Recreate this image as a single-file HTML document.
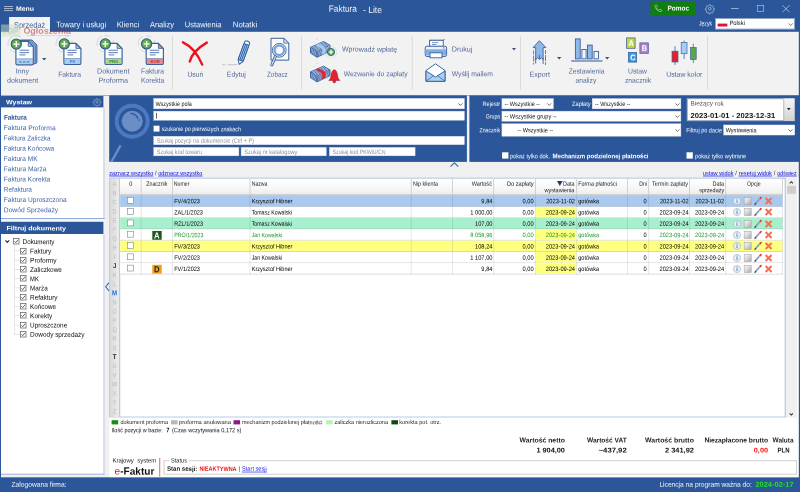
<!DOCTYPE html>
<html lang="pl"><head><meta charset="utf-8"><title>Faktura - Lite</title>
<style>
html,body{margin:0;padding:0;}
body{width:800px;height:492px;overflow:hidden;background:#2b579a;position:relative;font-family:"Liberation Sans",sans-serif;font-size:7px;color:#000;}
div{position:absolute;box-sizing:border-box;}
svg{position:absolute;overflow:visible;}
.t{white-space:nowrap;transform-origin:0 0;}
#app{left:0;top:0;width:800px;height:492px;will-change:transform;}
.inp{background:#fff;border:0.5px solid #c4cede;}
.lnk{color:#1c1ce0;text-decoration:underline;text-decoration-thickness:0.6px;text-underline-offset:0.6px;}
</style></head>
<body>
<div id="app">
<svg style="left:0px;top:0px" width="800" height="492"><rect x="0" y="0" width="800" height="492" fill="#2b579a"/></svg>
<svg style="left:4px;top:6px" width="9" height="1"><rect x="0" y="0.25" width="9" height="0.7" fill="#d3dcee"/></svg>
<svg style="left:4px;top:8px" width="9" height="1"><rect x="0" y="0.25" width="9" height="0.7" fill="#d3dcee"/></svg>
<svg style="left:4px;top:10px" width="9" height="2"><rect x="0" y="0.35" width="9" height="0.7" fill="#d3dcee"/></svg>
<div class="t" style="left:16px;top:4px;transform:translate(0px,0.7px) rotate(0.1deg) scaleX(1.094);font-size:6.3px;line-height:7px;color:#fff;font-weight:bold;">Menu</div>
<div class="t" style="left:328px;top:3px;transform:translate(0.8px,0.8px) rotate(0.1deg) scaleX(0.904);font-size:9.2px;line-height:10px;color:#f4f6fb;">Faktura</div>
<div class="t" style="left:363px;top:5px;transform:translate(0px,0px) rotate(0.1deg) scaleX(0.929);font-size:9.2px;line-height:10px;color:#f4f6fb;">- Lite</div>
<svg style="left:650px;top:1px" width="46" height="15"><rect x="0.4" y="0" width="45.2" height="14.6" fill="#117d13"/></svg>
<svg style="left:654px;top:4.3px" width="8.6" height="8.6" viewBox="0 0 24 24"><path d="M6.6 10.8c1.4 2.8 3.8 5.1 6.6 6.6l2.200-2.200c.3-.3.700-.4 1-.2 1.100.4 2.300.6 3.600.6.600 0 1 .4 1 1V20c0 .6-.4 1-1 1C10.600 21 3 13.400 3 4c0-.6.400-1 1-1h3.500c.6 0 1 .4 1 1 0 1.300.2 2.500.6 3.600.1.300 0 .7-.2 1z" fill="none" stroke="#bfe3c0" stroke-width="1.700"/></svg>
<div class="t" style="left:667px;top:4px;transform:translate(0.6px,0.52px) rotate(0.1deg) scaleX(0.917);font-size:7px;line-height:7px;color:#fff;font-weight:bold;">Pomoc</div>
<svg style="left:705.200px;top:3.900px" width="9.600" height="9.600" viewBox="0 0 20 20"><circle cx="10" cy="10" r="2.900" fill="none" stroke="#c6d3ea" stroke-width="1.300"/><path d="M10 1.600l1.500 0.200 0.600 2 1.700 0.700 1.900-1 2 2-1 1.900 0.700 1.700 2 0.600v2.600l-2 0.600-0.700 1.700 1 1.900-2 2-1.900-1-1.700 0.700-0.600 2h-2.800l-0.600-2-1.700-0.700-1.900 1-2-2 1-1.900-0.700-1.700-2-0.600v-2.600l2-0.600 0.700-1.700-1-1.900 2-2 1.900 1 1.700-0.700 0.600-2z" fill="none" stroke="#c6d3ea" stroke-width="1.300" stroke-linejoin="round"/></svg>
<svg style="left:731px;top:8px" width="8" height="1"><rect x="0" y="0.3" width="7.6" height="0.7" fill="#c3cfe6"/></svg>
<svg style="left:757px;top:5px" width="7" height="7"><rect x="0.3" y="0.6" width="6.4" height="5.8" fill="none" stroke="#bccae4" stroke-width="0.6"/></svg>
<svg style="left:782.400px;top:4.900px" width="8" height="7.600" viewBox="0 0 8 8"><path d="M0.300 0.300L7.700 7.700M7.700 0.300L0.300 7.700" stroke="#cdd8ec" stroke-width="0.700" fill="none"/></svg>
<div class="t" style="left:699px;top:19px;transform:translate(0px,0.44px) rotate(0.1deg) scaleX(0.807);font-size:6.3px;line-height:7px;color:#f4f6fb;">Język</div>
<svg style="left:715px;top:18px" width="80" height="12"><rect x="0.5" y="0.5" width="79" height="10.6" fill="#fff" stroke="#8fa3c8" stroke-width="1"/></svg>
<svg style="left:717px;top:23px" width="11" height="4"><rect x="0.6" y="0.6" width="9.8" height="2.9" fill="#dc143c"/></svg>
<div class="t" style="left:729px;top:19px;transform:translate(0.4px,0.04px) rotate(0.1deg) scaleX(0.928);font-size:6.3px;line-height:7px;color:#111;">Polski</div>
<svg style="left:787.8px;top:23.2px" width="5.4" height="3.2" viewBox="0 0 50 32"><path d="M4 4L25 26L46 4" stroke="#444" stroke-width="7" fill="none"/></svg>
<svg style="left:9px;top:17px" width="41" height="16"><rect x="0.1" y="0" width="40.9" height="15.5" fill="#f3f3f3"/></svg>
<div class="t" style="left:14px;top:20px;transform:translate(0px,0.8px) rotate(0.1deg) scaleX(0.912);font-size:8.1px;line-height:9px;color:#3a5a98;">Sprzedaż</div>
<div class="t" style="left:56px;top:20px;transform:translate(0.2px,0.3px) rotate(0.1deg) scaleX(0.941);font-size:8.1px;line-height:9px;color:#f2f5fa;">Towary i usługi</div>
<div class="t" style="left:116px;top:20px;transform:translate(0.8px,0.3px) rotate(0.1deg) scaleX(0.939);font-size:8.1px;line-height:9px;color:#f2f5fa;">Klienci</div>
<div class="t" style="left:150px;top:20px;transform:translate(0px,0.3px) rotate(0.1deg) scaleX(0.919);font-size:8.1px;line-height:9px;color:#f2f5fa;">Analizy</div>
<div class="t" style="left:184px;top:20px;transform:translate(0.8px,0.3px) rotate(0.1deg) scaleX(0.926);font-size:8.1px;line-height:9px;color:#f2f5fa;">Ustawienia</div>
<div class="t" style="left:232px;top:20px;transform:translate(0.8px,0.3px) rotate(0.1deg) scaleX(0.968);font-size:8.1px;line-height:9px;color:#f2f5fa;">Notatki</div>
<svg style="left:1px;top:31px" width="798" height="65"><rect x="0" y="0.8" width="798" height="63.5" fill="#f2f2f2"/></svg>
<div class="t" style="left:15px;top:66px;transform:translate(0.8px,0.4px) rotate(0.1deg) scaleX(0.97);font-size:7.2px;line-height:9px;color:#53699a;">Inny</div>
<div class="t" style="left:7px;top:75px;transform:translate(0px,0.8px) rotate(0.1deg) scaleX(0.987);font-size:7.2px;line-height:9px;color:#53699a;">dokument</div>
<div class="t" style="left:58px;top:69px;transform:translate(0.25px,0.7px) rotate(0.1deg) scaleX(0.938);font-size:7.2px;line-height:9px;color:#53699a;">Faktura</div>
<div class="t" style="left:97px;top:66px;transform:translate(0.05px,0.4px) rotate(0.1deg) scaleX(0.99);font-size:7.2px;line-height:9px;color:#53699a;">Dokument</div>
<div class="t" style="left:98px;top:75px;transform:translate(0.55px,0.8px) rotate(0.1deg);font-size:7.2px;line-height:9px;color:#53699a;">Proforma</div>
<div class="t" style="left:141px;top:66px;transform:translate(0.05px,0.4px) rotate(0.1deg) scaleX(0.938);font-size:7.2px;line-height:9px;color:#53699a;">Faktura</div>
<div class="t" style="left:140px;top:75px;transform:translate(0.95px,0.8px) rotate(0.1deg) scaleX(0.939);font-size:7.2px;line-height:9px;color:#53699a;">Korekta</div>
<div class="t" style="left:187px;top:69px;transform:translate(0.5px,0.7px) rotate(0.1deg) scaleX(0.94);font-size:7.2px;line-height:9px;color:#53699a;">Usuń</div>
<div class="t" style="left:226px;top:69px;transform:translate(0.85px,0.7px) rotate(0.1deg) scaleX(0.954);font-size:7.2px;line-height:9px;color:#53699a;">Edytuj</div>
<div class="t" style="left:267px;top:69px;transform:translate(0px,0.7px) rotate(0.1deg) scaleX(0.881);font-size:7.2px;line-height:9px;color:#53699a;">Zobacz</div>
<div class="t" style="left:342px;top:44px;transform:translate(0px,0.6px) rotate(0.1deg) scaleX(0.971);font-size:7.2px;line-height:9px;color:#53699a;">Wprowadź wpłatę</div>
<div class="t" style="left:343px;top:69px;transform:translate(0.8px,0.2px) rotate(0.1deg) scaleX(0.941);font-size:7.2px;line-height:9px;color:#53699a;">Wezwanie do zapłaty</div>
<div class="t" style="left:451px;top:44px;transform:translate(0.7px,0.6px) rotate(0.1deg);font-size:7.2px;line-height:9px;color:#53699a;">Drukuj</div>
<div class="t" style="left:451px;top:69px;transform:translate(0.7px,0.2px) rotate(0.1deg) scaleX(0.94);font-size:7.2px;line-height:9px;color:#53699a;">Wyślij mailem</div>
<div class="t" style="left:529px;top:69px;transform:translate(0.45px,0.7px) rotate(0.1deg) scaleX(0.985);font-size:7.2px;line-height:9px;color:#53699a;">Export</div>
<div class="t" style="left:568px;top:66px;transform:translate(0.7px,0.4px) rotate(0.1deg) scaleX(0.932);font-size:7.2px;line-height:9px;color:#53699a;">Zestawienia</div>
<div class="t" style="left:575px;top:75px;transform:translate(0.55px,0.8px) rotate(0.1deg) scaleX(0.924);font-size:7.2px;line-height:9px;color:#53699a;">analizy</div>
<div class="t" style="left:628px;top:66px;transform:translate(0px,0.4px) rotate(0.1deg) scaleX(0.95);font-size:7.2px;line-height:9px;color:#53699a;">Ustaw</div>
<div class="t" style="left:625px;top:75px;transform:translate(0px,0.8px) rotate(0.1deg) scaleX(0.935);font-size:7.2px;line-height:9px;color:#53699a;">znacznik</div>
<div class="t" style="left:666px;top:69px;transform:translate(0.15px,0.7px) rotate(0.1deg) scaleX(0.965);font-size:7.2px;line-height:9px;color:#53699a;">Ustaw kolor</div>
<svg style="left:172px;top:36px" width="1" height="54"><rect x="0" y="0" width="0.8" height="53.4" fill="#d4d4d4"/></svg>
<svg style="left:301px;top:36px" width="1" height="54"><rect x="0.1" y="0" width="0.8" height="53.4" fill="#d4d4d4"/></svg>
<svg style="left:411px;top:36px" width="2" height="54"><rect x="0.8" y="0" width="0.8" height="53.4" fill="#d4d4d4"/></svg>
<svg style="left:520px;top:36px" width="1" height="54"><rect x="0.1" y="0" width="0.8" height="53.4" fill="#d4d4d4"/></svg>
<svg style="left:707px;top:36px" width="1" height="54"><rect x="0.1" y="0" width="0.8" height="53.4" fill="#d4d4d4"/></svg>
<svg style="left:42.3px;top:57.6px" width="4.4" height="2.6" viewBox="0 0 44 26"><path d="M0 0H44L22 26Z" fill="#3a4f78"/></svg>
<svg style="left:512.3px;top:47.7px" width="4" height="2.4" viewBox="0 0 44 26"><path d="M0 0H44L22 26Z" fill="#3a4f78"/></svg>
<svg style="left:557.3px;top:56.9px" width="4.4" height="2.6" viewBox="0 0 44 26"><path d="M0 0H44L22 26Z" fill="#3a4f78"/></svg>
<svg style="left:604.8px;top:56.9px" width="4.4" height="2.6" viewBox="0 0 44 26"><path d="M0 0H44L22 26Z" fill="#3a4f78"/></svg>
<svg style="left:1px;top:24px" width="20" height="13"><rect x="0" y="0.5" width="19.3" height="12" fill="rgba(206,226,190,0.5)"/></svg>
<div class="t" style="left:2px;top:25px;transform:translate(0px,0.7px) rotate(0.1deg) scaleX(0.964);font-size:8.4px;line-height:10px;color:rgba(130,150,160,0.3);font-weight:bold;">TOP</div>
<div class="t" style="left:23px;top:25px;transform:translate(0.4px,0.7px) rotate(0.1deg) scaleX(1.014);font-size:8.8px;line-height:10px;color:rgba(175,30,40,0.5);font-weight:bold;">Ogłoszenia</div>
<svg style="left:26px;top:35px" width="45" height="1"><rect x="0" y="0" width="45" height="0.9" fill="rgba(110,110,110,0.2)"/></svg>
<svg style="left:0;top:0" width="200" height="100" viewBox="0 0 200 100"><circle cx="16.3" cy="44.1" r="8.300" fill="none" stroke="#c9cdd5" stroke-width="0.800" stroke-dasharray="11 3 6 4"/><path d="M19.5 41.6q0 -1.6 1.6 -1.6h10.8l5 5v16.9q0 1.6 -1.6 1.6h-14.2q-1.6 0 -1.6 -1.6z" fill="#8fb2e2" stroke="#3a5f9c" stroke-width="1"/><path d="M17.7 42.25q0 -1.6 1.6 -1.6h10.8l5 5v16.9q0 1.6 -1.6 1.6h-14.2q-1.6 0 -1.6 -1.6z" fill="#b9d1f0" stroke="#3a5f9c" stroke-width="1"/><path d="M15.9 42.9q0 -1.6 1.6 -1.6h10.8l5 5v16.9q0 1.6 -1.6 1.6h-14.2q-1.6 0 -1.6 -1.6z" fill="#fdfeff"/><path d="M16.4 59.1h16.4v4.1q0 1.100 -1.100 1.100h-14.2q-1.100 0 -1.100 -1.100z" fill="#a9d0f7"/><path d="M16.4 58.8h16.4" stroke="#3a5f9c" stroke-width="0.700" opacity="0.750"/><path d="M28.3 41.6v4.7h4.7z" fill="#a9c6ea" stroke="#3a5f9c" stroke-width="0.800"/><rect x="19.5" y="49.7" width="9.6" height="1.150" fill="#6f8cbf"/><rect x="19.5" y="52" width="9.6" height="1.150" fill="#6f8cbf"/><rect x="19.5" y="54.3" width="5.95" height="1.150" fill="#6f8cbf"/><path d="M15.9 42.9q0 -1.6 1.6 -1.6h10.8l5 5v16.9q0 1.6 -1.6 1.6h-14.2q-1.6 0 -1.6 -1.6z" fill="none" stroke="#3a5f9c" stroke-width="1.150"/><rect x="19.2" y="61.4" width="2.600" height="1.100" fill="#4f74b0"/><rect x="23" y="61.4" width="2.600" height="1.100" fill="#4f74b0"/><rect x="26.8" y="61.4" width="2.600" height="1.100" fill="#4f74b0"/><circle cx="16.3" cy="44.1" r="5.100" fill="#62ad4a" stroke="#2c5a8c" stroke-width="1.100"/><path d="M16.3 41.1v6M13.3 44.1h6" stroke="#fff" stroke-width="1.400"/></svg>
<svg style="left:0;top:0" width="200" height="100" viewBox="0 0 200 100"><circle cx="64.3" cy="43.9" r="8.300" fill="none" stroke="#c9cdd5" stroke-width="0.800" stroke-dasharray="11 3 6 4"/><path d="M63.9 45q0 -1.6 1.6 -1.6h10.4l5 5v14.5q0 1.6 -1.6 1.6h-13.8q-1.6 0 -1.6 -1.6z" fill="#fdfeff"/><path d="M64.4 58.8h16v4.1q0 1.100 -1.100 1.100h-13.8q-1.100 0 -1.100 -1.100z" fill="#a4cdf5"/><path d="M64.4 58.5h16" stroke="#3a5f9c" stroke-width="0.700" opacity="0.750"/><path d="M75.9 43.7v4.7h4.7z" fill="#a9c6ea" stroke="#3a5f9c" stroke-width="0.800"/><rect x="67.5" y="49.7" width="9.2" height="1.150" fill="#6f8cbf"/><rect x="67.5" y="52" width="9.2" height="1.150" fill="#6f8cbf"/><rect x="67.5" y="54.3" width="5.7" height="1.150" fill="#6f8cbf"/><path d="M63.9 45q0 -1.6 1.6 -1.6h10.4l5 5v14.5q0 1.6 -1.6 1.6h-13.8q-1.6 0 -1.6 -1.6z" fill="none" stroke="#3a5f9c" stroke-width="1.150"/><text x="72.7" y="63.3" font-family="Liberation Sans, sans-serif" font-weight="bold" font-size="4.200" text-anchor="middle" fill="#3f6cb0">FV</text><circle cx="64.3" cy="43.9" r="5.100" fill="#62ad4a" stroke="#2c5a8c" stroke-width="1.100"/><path d="M64.3 40.9v6M61.3 43.9h6" stroke="#fff" stroke-width="1.400"/></svg>
<svg style="left:0;top:0" width="200" height="100" viewBox="0 0 200 100"><circle cx="105.3" cy="43.9" r="8.300" fill="none" stroke="#c9cdd5" stroke-width="0.800" stroke-dasharray="11 3 6 4"/><path d="M104.9 45q0 -1.6 1.6 -1.6h10.6l5 5v14.5q0 1.6 -1.6 1.6h-14q-1.6 0 -1.6 -1.6z" fill="#fdfeff"/><path d="M105.4 58.8h16.2v4.1q0 1.100 -1.100 1.100h-14q-1.100 0 -1.100 -1.100z" fill="#a6d98c"/><path d="M105.4 58.5h16.2" stroke="#3a5f9c" stroke-width="0.700" opacity="0.750"/><path d="M117.1 43.7v4.7h4.7z" fill="#a6d98c" stroke="#3a5f9c" stroke-width="0.800"/><rect x="108.5" y="49.7" width="9.4" height="1.150" fill="#6f8cbf"/><rect x="108.5" y="52" width="9.4" height="1.150" fill="#6f8cbf"/><rect x="108.5" y="54.3" width="5.83" height="1.150" fill="#6f8cbf"/><path d="M104.9 45q0 -1.6 1.6 -1.6h10.6l5 5v14.5q0 1.6 -1.6 1.6h-14q-1.6 0 -1.6 -1.6z" fill="none" stroke="#3a5f9c" stroke-width="1.150"/><text x="113.8" y="63.3" font-family="Liberation Sans, sans-serif" font-weight="bold" font-size="4.200" text-anchor="middle" fill="#3f7a30">PRO</text><circle cx="105.3" cy="43.9" r="5.100" fill="#62ad4a" stroke="#2c5a8c" stroke-width="1.100"/><path d="M105.3 40.9v6M102.3 43.9h6" stroke="#fff" stroke-width="1.400"/></svg>
<svg style="left:0;top:0" width="200" height="100" viewBox="0 0 200 100"><circle cx="146.6" cy="43.9" r="8.300" fill="none" stroke="#c9cdd5" stroke-width="0.800" stroke-dasharray="11 3 6 4"/><path d="M146.2 45q0 -1.6 1.6 -1.6h10.6l5 5v14.5q0 1.6 -1.6 1.6h-14q-1.6 0 -1.6 -1.6z" fill="#fdfeff"/><path d="M146.7 58.8h16.2v4.1q0 1.100 -1.100 1.100h-14q-1.100 0 -1.100 -1.100z" fill="#f08888"/><path d="M146.7 58.5h16.2" stroke="#3a5f9c" stroke-width="0.700" opacity="0.750"/><path d="M158.4 43.7v4.7h4.7z" fill="#f08888" stroke="#3a5f9c" stroke-width="0.800"/><rect x="149.8" y="49.7" width="9.4" height="1.150" fill="#6f8cbf"/><rect x="149.8" y="52" width="9.4" height="1.150" fill="#6f8cbf"/><rect x="149.8" y="54.3" width="5.83" height="1.150" fill="#6f8cbf"/><path d="M146.2 45q0 -1.6 1.6 -1.6h10.6l5 5v14.5q0 1.6 -1.6 1.6h-14q-1.6 0 -1.6 -1.6z" fill="none" stroke="#3a5f9c" stroke-width="1.150"/><text x="155.1" y="63.3" font-family="Liberation Sans, sans-serif" font-weight="bold" font-size="4.200" text-anchor="middle" fill="#b83434">KOR</text><circle cx="146.6" cy="43.9" r="5.100" fill="#62ad4a" stroke="#2c5a8c" stroke-width="1.100"/><path d="M146.6 40.9v6M143.6 43.9h6" stroke="#fff" stroke-width="1.400"/></svg>
<svg style="left:0;top:0" width="800" height="100" viewBox="0 0 800 100"><path d="M183 42.300C190.500 45.800 198 54.500 202.200 64.600" stroke="#ea1420" stroke-width="2.400" fill="none" stroke-linecap="round"/><path d="M206.800 42.600C198.500 47.500 191.500 54.500 189.800 61.500" stroke="#ea1420" stroke-width="2.400" fill="none" stroke-linecap="round"/></svg>
<svg style="left:0;top:0" width="800" height="100" viewBox="0 0 800 100"><path d="M222 64.700h3.500M227.700 64.700h9.700" stroke="#bcc0ca" stroke-width="0.900"/><g transform="translate(239.200 64.300) rotate(-69.900)"><path d="M0 0L4.200 -2.600H22.700a1.800 1.800 0 0 1 1.800 1.800v1.600a1.800 1.800 0 0 1 -1.800 1.800H4.200z" fill="#fdfeff" stroke="#2f5c9e" stroke-width="1" stroke-linejoin="round"/><rect x="4.200" y="-2.600" width="17" height="5.200" fill="#a3caf0" stroke="#2f5c9e" stroke-width="0.900"/><path d="M4.200 -0.850h17M4.200 0.850h17" stroke="#2f5c9e" stroke-width="0.850" fill="none"/></g></svg>
<svg style="left:0;top:0" width="800" height="100" viewBox="0 0 800 100"><path d="M271 38.300h12.800l5 4.800v17h-17.800z" fill="#fbfcfe" stroke="#3a5f9c" stroke-width="1"/><path d="M283.800 38.300v4.800h5z" fill="#d7e4f6" stroke="#3a5f9c" stroke-width="0.800"/><circle cx="279.300" cy="50.300" r="6.900" fill="#dfeaf8" stroke="#3a5f9c" stroke-width="0.900"/><circle cx="279.300" cy="50.300" r="4.700" fill="#f9fbfe" stroke="#6f9ad6" stroke-width="2"/><path d="M276.600 52.300a3 3 0 0 1 1.500-4.500" stroke="#b9cfee" stroke-width="0.700" fill="none"/><path d="M275.300 56.700L271.800 64.800" stroke="#3a5f9c" stroke-width="3" stroke-linecap="round"/><path d="M275.300 56.700L271.800 64.800" stroke="#cfe0f6" stroke-width="1.300" stroke-linecap="round"/></svg>
<svg style="left:0;top:0" width="800" height="100" viewBox="0 0 800 100"><path d="M310.5 47.3L323.5 41.5L330 45.3L330 51.1L317 57.3L310.5 53.1z" fill="#eaf1fb" stroke="#2f5c9e" stroke-width="0.900" stroke-linejoin="round"/><path d="M310.5 48.5L317 52.7L330 46.5M310.5 49.7L317 53.9L330 47.7M310.5 50.9L317 55.1L330 48.9M310.5 52.1L317 56.3L330 50.1M311.8 48.14l13 -5.8M313.1 48.98l13 -5.8M314.4 49.82l13 -5.8M315.7 50.66l13 -5.8" fill="none" stroke="#2f5c9e" stroke-width="0.800"/><path d="M310.5 47.3L317 51.5L330 45.3M317 51.5L317 57.3" fill="none" stroke="#2f5c9e" stroke-width="0.900"/><path d="M315.7 44.98L318.9 43.55L325.4 47.75L325.4 53.25L322.2 54.68L322.2 49.18z" fill="#a3caf0"/><circle cx="317" cy="39" r="0.500" fill="#aab4c4"/><circle cx="314.500" cy="42" r="0.450" fill="#aab4c4"/></svg>
<svg style="left:0;top:0" width="800" height="100" viewBox="0 0 800 100"><path d="M310.5 71.9L323.5 66.1L330 69.9L330 75.7L317 81.9L310.5 77.7z" fill="#eaf1fb" stroke="#2f5c9e" stroke-width="0.900" stroke-linejoin="round"/><path d="M310.5 73.1L317 77.3L330 71.1M310.5 74.3L317 78.5L330 72.3M310.5 75.5L317 79.7L330 73.5M310.5 76.7L317 80.9L330 74.7M311.8 72.74l13 -5.8M313.1 73.58l13 -5.8M314.4 74.42l13 -5.8M315.7 75.26l13 -5.8" fill="none" stroke="#2f5c9e" stroke-width="0.800"/><path d="M310.5 71.9L317 76.1L330 69.9M317 76.1L317 81.9" fill="none" stroke="#2f5c9e" stroke-width="0.900"/><path d="M315.7 69.58L318.9 68.15L325.4 72.35L325.4 77.85L322.2 79.28L322.2 73.78z" fill="#e6222c"/><circle cx="317" cy="63.6" r="0.500" fill="#aab4c4"/><circle cx="314.500" cy="66.6" r="0.450" fill="#aab4c4"/></svg>
<svg style="left:325.400px;top:46px" width="12" height="12" viewBox="0 0 12 12"><circle cx="6" cy="6" r="5.700" fill="none" stroke="#cdd1d8" stroke-width="0.600" stroke-dasharray="7 2"/><circle cx="6" cy="6" r="3.600" fill="#62ad4a" stroke="#2c5a8c" stroke-width="0.900"/><path d="M6 3.800v4.400M3.800 6h4.400" stroke="#fff" stroke-width="1.200"/></svg>
<svg style="left:0;top:0" width="800" height="100" viewBox="0 0 800 100"><path d="M328.800 80.400C331 78.800 330.900 75.800 331.400 73.700C331.900 71.200 333.300 69.700 334.300 69.700S336.700 71.200 337.200 73.700C337.700 75.800 337.600 78.800 339.800 80.400z" fill="#e8222c" stroke="#9a2030" stroke-width="0.600" stroke-linejoin="round"/><circle cx="334.300" cy="81.500" r="1.400" fill="#e8222c" stroke="#9a2030" stroke-width="0.500"/><path d="M327.300 74c-.8 1.500-.8 3.500 0 5" stroke="#b9c0cc" stroke-width="0.500" fill="none"/></svg>
<svg style="left:0;top:0" width="800" height="100" viewBox="0 0 800 100"><path d="M429.700 46.200V40.300h12.600c1.300 0 2.100-.4 2.100-1.200" fill="none" stroke="#3a5f9c" stroke-width="0.900"/><rect x="429.700" y="40.300" width="13.500" height="6.200" fill="#fdfeff" stroke="#3a5f9c" stroke-width="0.900"/><rect x="432" y="42.200" width="6.500" height="0.900" fill="#6b8cc0"/><rect x="432" y="44" width="4.500" height="0.900" fill="#6b8cc0"/><rect x="425.200" y="46.200" width="21.400" height="10.300" rx="1.800" fill="#eaf2fc" stroke="#3a5f9c" stroke-width="0.950"/><rect x="425.700" y="49.300" width="20.400" height="6.200" fill="#7eb0e6"/><rect x="430" y="52.800" width="12" height="5" fill="#fdfeff" stroke="#3a5f9c" stroke-width="0.900"/><circle cx="443.800" cy="47.900" r="0.650" fill="#3a5f9c"/><path d="M426 70.500L435.500 63.800L445 70.500V81.300H426z" fill="#fdfeff" stroke="#3a5f9c" stroke-width="0.950" stroke-linejoin="round"/><path d="M426 71L435.500 77L445 71V81.300H426z" fill="#a9d0f5" stroke="#3a5f9c" stroke-width="0.950" stroke-linejoin="round"/><path d="M426 81.300L433.400 75.600M445 81.300L437.600 75.600" fill="none" stroke="#3a5f9c" stroke-width="0.800"/></svg>
<svg style="left:0;top:0" width="800" height="100" viewBox="0 0 800 100"><path d="M539.400 40.700L533.100 47.600H535.700V59.500L537.600 57.800L539.400 59.500L541.200 57.800L543.100 59.500V47.600H545.900z" fill="#8fb8ea" stroke="#3a5f9c" stroke-width="0.900" stroke-linejoin="round"/><path d="M535.700 58v5.500M543.100 58v6M539.400 55v4" stroke="#3a5f9c" stroke-width="0.900" fill="none"/><path d="M533.600 50.500v14M545.500 50v15" stroke="#3a5f9c" stroke-width="0.800" stroke-dasharray="4 1 6 1.200" fill="none"/><rect x="575.400" y="38.900" width="4.800" height="20" fill="#8fb8ea" stroke="#3a5f9c" stroke-width="0.900"/><rect x="581.900" y="49.500" width="4.200" height="9.400" fill="#f4f8fd" stroke="#3a5f9c" stroke-width="0.900"/><rect x="587.500" y="45.100" width="4.700" height="13.800" fill="#8fb8ea" stroke="#3a5f9c" stroke-width="0.900"/><rect x="594" y="51.400" width="4.500" height="7.500" fill="#f4f8fd" stroke="#3a5f9c" stroke-width="0.900"/><path d="M571.200 61h31.300" stroke="#4a6ea8" stroke-width="1.200"/></svg>
<svg style="left:626px;top:37px" width="10" height="12"><rect x="0.6" y="0.9" width="8.5" height="10.4" fill="#c4d644" stroke="#3e64a0" stroke-width="0.8"/></svg>
<div class="t" style="left:628px;top:39px;transform:translate(0.52px,0.1px) rotate(0.1deg) scaleX(0.9);font-size:8.2px;line-height:9px;color:#fff;font-weight:bold;">A</div>
<svg style="left:639px;top:42px" width="10" height="12"><rect x="0.9" y="0.9" width="8.4" height="10.4" fill="#b57fc6" stroke="#3e64a0" stroke-width="0.8"/></svg>
<div class="t" style="left:641px;top:44px;transform:translate(0.77px,0.1px) rotate(0.1deg) scaleX(0.9);font-size:8.2px;line-height:9px;color:#fff;font-weight:bold;">B</div>
<svg style="left:628px;top:52px" width="9" height="11"><rect x="0.4" y="0.4" width="8.2" height="9.7" fill="#3d98de" stroke="#3e64a0" stroke-width="0.8"/></svg>
<div class="t" style="left:630px;top:53px;transform:translate(0.17px,0.25px) rotate(0.1deg) scaleX(0.9);font-size:8.2px;line-height:9px;color:#fff;font-weight:bold;">C</div>
<svg style="left:668px;top:36px" width="32" height="30" viewBox="0 0 32 30"><path d="M7 10.200v18.800M16.100 4.500v18.500M25.300 7.700v19.300" stroke="#3e64a0" stroke-width="0.800"/><rect x="4" y="15.200" width="6" height="10.800" fill="#e6202a" stroke="#3e64a0" stroke-width="0.700"/><rect x="13.200" y="6.500" width="5.800" height="11.200" fill="#a8cdf4" stroke="#3e64a0" stroke-width="0.700"/><rect x="22.500" y="11.500" width="5.700" height="12" fill="#5aa845" stroke="#3e64a0" stroke-width="0.700"/></svg>
<svg style="left:1px;top:95px" width="799" height="383"><rect x="0" y="0.6" width="798.5" height="382" fill="#f0f0f0"/></svg>
<svg style="left:1px;top:96px" width="103" height="12"><rect x="0" y="0" width="102.4" height="11.6" fill="#2b579a"/></svg>
<div class="t" style="left:6px;top:98px;transform:translate(0.1px,0.2px) rotate(0.1deg) scaleX(1.146);font-size:6.1px;line-height:7px;color:#fff;font-weight:bold;">Wystaw</div>
<svg style="left:93.100px;top:97.900px" width="8" height="8" viewBox="0 0 20 20"><circle cx="10" cy="10" r="2.900" fill="none" stroke="#b4c4e2" stroke-width="1.300"/><path d="M10 1.600l1.500 0.200 0.600 2 1.700 0.700 1.900-1 2 2-1 1.900 0.700 1.700 2 0.600v2.600l-2 0.600-0.700 1.700 1 1.900-2 2-1.900-1-1.700 0.700-0.600 2h-2.800l-0.600-2-1.700-0.700-1.900 1-2-2 1-1.900-0.700-1.700-2-0.600v-2.600l2-0.600 0.700-1.700-1-1.900 2-2 1.900 1 1.700-0.700 0.600-2z" fill="none" stroke="#b4c4e2" stroke-width="1.300" stroke-linejoin="round"/></svg>
<svg style="left:1px;top:107px" width="104" height="112"><rect x="0" y="0.6" width="103.5" height="111.3" fill="#fff"/><rect x="102.5" y="0.6" width="1" height="111.3" fill="#b4c4e0"/><rect x="0" y="111" width="103.5" height="0.9" fill="#7d9acd"/></svg>
<svg style="left:1px;top:218px" width="104" height="4"><rect x="0" y="0.9" width="103.5" height="2.9" fill="#f6f6f6"/></svg>
<div class="t" style="left:3px;top:113px;transform:translate(0.9px,0.82px) rotate(0.1deg) scaleX(0.91);font-size:7px;line-height:7px;color:#2f5092;font-weight:bold;">Faktura</div>
<div class="t" style="left:3px;top:124px;transform:translate(0.8px,0.09px) rotate(0.1deg) scaleX(0.951);font-size:7px;line-height:7px;color:#4065a8;">Faktura Proforma</div>
<div class="t" style="left:3px;top:134px;transform:translate(0.8px,0.36px) rotate(0.1deg) scaleX(0.911);font-size:7px;line-height:7px;color:#4065a8;">Faktura Zaliczka</div>
<div class="t" style="left:3px;top:144px;transform:translate(0.8px,0.63px) rotate(0.1deg) scaleX(0.925);font-size:7px;line-height:7px;color:#4065a8;">Faktura Końcowa</div>
<div class="t" style="left:3px;top:154px;transform:translate(0.8px,0.9px) rotate(0.1deg) scaleX(0.932);font-size:7px;line-height:7px;color:#4065a8;">Faktura MK</div>
<div class="t" style="left:3px;top:165px;transform:translate(0.8px,0.17px) rotate(0.1deg) scaleX(0.946);font-size:7px;line-height:7px;color:#4065a8;">Faktura Marża</div>
<div class="t" style="left:3px;top:175px;transform:translate(0.8px,0.44px) rotate(0.1deg) scaleX(0.936);font-size:7px;line-height:7px;color:#4065a8;">Faktura Korekta</div>
<div class="t" style="left:3px;top:185px;transform:translate(0.8px,0.71px) rotate(0.1deg) scaleX(0.929);font-size:7px;line-height:7px;color:#4065a8;">Refaktura</div>
<div class="t" style="left:3px;top:195px;transform:translate(0.8px,0.98px) rotate(0.1deg) scaleX(0.944);font-size:7px;line-height:7px;color:#4065a8;">Faktura Uproszczona</div>
<div class="t" style="left:3px;top:206px;transform:translate(0.8px,0.25px) rotate(0.1deg) scaleX(0.958);font-size:7px;line-height:7px;color:#4065a8;">Dowód Sprzedaży</div>
<svg style="left:1px;top:221px" width="103" height="14"><rect x="0" y="0.8" width="102.4" height="12.4" fill="#2b579a"/></svg>
<div class="t" style="left:6px;top:224px;transform:translate(0.5px,0.3px) rotate(0.1deg) scaleX(1.165);font-size:6.1px;line-height:7px;color:#fff;font-weight:bold;">Filtruj dokumenty</div>
<svg style="left:1px;top:234px" width="104" height="241"><rect x="0" y="0" width="103.5" height="240.6" fill="#fff"/><rect x="102.5" y="0" width="1" height="240.6" fill="#b4c4e0"/><rect x="0" y="239.7" width="103.5" height="0.9" fill="#8ea8d6"/></svg>
<svg style="left:5.200px;top:239.800px" width="4.600" height="3.200" viewBox="0 0 6 4"><path d="M0.500 0.500L3 3.200L5.500 0.500" stroke="#333" stroke-width="1.500" fill="none"/></svg>
<svg style="left:13.1px;top:238.1px" width="6.4" height="6.4" viewBox="0 0 10 10"><rect x="0.600" y="0.600" width="8.800" height="8.800" fill="#fff" stroke="#6c6c6c" stroke-width="1.250"/><path d="M2.300 5.200L4.300 7.300L7.900 2.700" fill="none" stroke="#484848" stroke-width="1.350"/></svg>
<div class="t" style="left:22px;top:238px;transform:translate(0.6px,0.1px) rotate(0.1deg) scaleX(0.898);font-size:7px;line-height:7px;color:#0c0c0c;">Dokumenty</div>
<svg style="left:14px;top:245px" width="1" height="90"><rect x="0.1" y="0" width="0.7" height="90" fill="#dadada"/></svg>
<svg style="left:14px;top:250px" width="7" height="2"><rect x="0.1" y="0.45" width="6.2" height="0.7" fill="#dadada"/></svg>
<svg style="left:20.3px;top:247.6px" width="6.4" height="6.4" viewBox="0 0 10 10"><rect x="0.600" y="0.600" width="8.800" height="8.800" fill="#fff" stroke="#6c6c6c" stroke-width="1.250"/><path d="M2.300 5.200L4.300 7.300L7.900 2.700" fill="none" stroke="#484848" stroke-width="1.350"/></svg>
<div class="t" style="left:30px;top:247px;transform:translate(0.1px,0.4px) rotate(0.1deg) scaleX(0.908);font-size:7px;line-height:7px;color:#0c0c0c;">Faktury</div>
<svg style="left:14px;top:259px" width="7" height="2"><rect x="0.1" y="0.72" width="6.2" height="0.7" fill="#dadada"/></svg>
<svg style="left:20.3px;top:256.87px" width="6.4" height="6.4" viewBox="0 0 10 10"><rect x="0.600" y="0.600" width="8.800" height="8.800" fill="#fff" stroke="#6c6c6c" stroke-width="1.250"/><path d="M2.300 5.200L4.300 7.300L7.900 2.700" fill="none" stroke="#484848" stroke-width="1.350"/></svg>
<div class="t" style="left:30px;top:256px;transform:translate(0.1px,0.67px) rotate(0.1deg) scaleX(0.933);font-size:7px;line-height:7px;color:#0c0c0c;">Proformy</div>
<svg style="left:14px;top:268px" width="7" height="2"><rect x="0.1" y="0.99" width="6.2" height="0.7" fill="#dadada"/></svg>
<svg style="left:20.3px;top:266.14px" width="6.4" height="6.4" viewBox="0 0 10 10"><rect x="0.600" y="0.600" width="8.800" height="8.800" fill="#fff" stroke="#6c6c6c" stroke-width="1.250"/><path d="M2.300 5.200L4.300 7.300L7.900 2.700" fill="none" stroke="#484848" stroke-width="1.350"/></svg>
<div class="t" style="left:30px;top:265px;transform:translate(0.1px,0.94px) rotate(0.1deg) scaleX(0.919);font-size:7px;line-height:7px;color:#0c0c0c;">Zaliczkowe</div>
<svg style="left:14px;top:278px" width="7" height="1"><rect x="0.1" y="0.26" width="6.2" height="0.7" fill="#dadada"/></svg>
<svg style="left:20.3px;top:275.41px" width="6.4" height="6.4" viewBox="0 0 10 10"><rect x="0.600" y="0.600" width="8.800" height="8.800" fill="#fff" stroke="#6c6c6c" stroke-width="1.250"/><path d="M2.300 5.200L4.300 7.300L7.900 2.700" fill="none" stroke="#484848" stroke-width="1.350"/></svg>
<div class="t" style="left:30px;top:275px;transform:translate(0.1px,0.21px) rotate(0.1deg) scaleX(0.829);font-size:7px;line-height:7px;color:#0c0c0c;">MK</div>
<svg style="left:14px;top:287px" width="7" height="2"><rect x="0.1" y="0.53" width="6.2" height="0.7" fill="#dadada"/></svg>
<svg style="left:20.3px;top:284.68px" width="6.4" height="6.4" viewBox="0 0 10 10"><rect x="0.600" y="0.600" width="8.800" height="8.800" fill="#fff" stroke="#6c6c6c" stroke-width="1.250"/><path d="M2.300 5.200L4.300 7.300L7.900 2.700" fill="none" stroke="#484848" stroke-width="1.350"/></svg>
<div class="t" style="left:30px;top:284px;transform:translate(0.1px,0.48px) rotate(0.1deg) scaleX(0.905);font-size:7px;line-height:7px;color:#0c0c0c;">Marża</div>
<svg style="left:14px;top:296px" width="7" height="2"><rect x="0.1" y="0.8" width="6.2" height="0.7" fill="#dadada"/></svg>
<svg style="left:20.3px;top:293.95px" width="6.4" height="6.4" viewBox="0 0 10 10"><rect x="0.600" y="0.600" width="8.800" height="8.800" fill="#fff" stroke="#6c6c6c" stroke-width="1.250"/><path d="M2.300 5.200L4.300 7.300L7.900 2.700" fill="none" stroke="#484848" stroke-width="1.350"/></svg>
<div class="t" style="left:30px;top:293px;transform:translate(0.1px,0.75px) rotate(0.1deg) scaleX(0.915);font-size:7px;line-height:7px;color:#0c0c0c;">Refaktury</div>
<svg style="left:14px;top:306px" width="7" height="1"><rect x="0.1" y="0.07" width="6.2" height="0.7" fill="#dadada"/></svg>
<svg style="left:20.3px;top:303.22px" width="6.4" height="6.4" viewBox="0 0 10 10"><rect x="0.600" y="0.600" width="8.800" height="8.800" fill="#fff" stroke="#6c6c6c" stroke-width="1.250"/><path d="M2.300 5.200L4.300 7.300L7.900 2.700" fill="none" stroke="#484848" stroke-width="1.350"/></svg>
<div class="t" style="left:30px;top:303px;transform:translate(0.1px,0.02px) rotate(0.1deg) scaleX(0.899);font-size:7px;line-height:7px;color:#0c0c0c;">Końcowe</div>
<svg style="left:14px;top:315px" width="7" height="2"><rect x="0.1" y="0.34" width="6.2" height="0.7" fill="#dadada"/></svg>
<svg style="left:20.3px;top:312.49px" width="6.4" height="6.4" viewBox="0 0 10 10"><rect x="0.600" y="0.600" width="8.800" height="8.800" fill="#fff" stroke="#6c6c6c" stroke-width="1.250"/><path d="M2.300 5.200L4.300 7.300L7.900 2.700" fill="none" stroke="#484848" stroke-width="1.350"/></svg>
<div class="t" style="left:30px;top:312px;transform:translate(0.1px,0.29px) rotate(0.1deg) scaleX(0.935);font-size:7px;line-height:7px;color:#0c0c0c;">Korekty</div>
<svg style="left:14px;top:324px" width="7" height="2"><rect x="0.1" y="0.61" width="6.2" height="0.7" fill="#dadada"/></svg>
<svg style="left:20.3px;top:321.76px" width="6.4" height="6.4" viewBox="0 0 10 10"><rect x="0.600" y="0.600" width="8.800" height="8.800" fill="#fff" stroke="#6c6c6c" stroke-width="1.250"/><path d="M2.300 5.200L4.300 7.300L7.900 2.700" fill="none" stroke="#484848" stroke-width="1.350"/></svg>
<div class="t" style="left:30px;top:321px;transform:translate(0.1px,0.56px) rotate(0.1deg) scaleX(0.908);font-size:7px;line-height:7px;color:#0c0c0c;">Uproszczone</div>
<svg style="left:14px;top:333px" width="7" height="2"><rect x="0.1" y="0.88" width="6.2" height="0.7" fill="#dadada"/></svg>
<svg style="left:20.3px;top:331.03px" width="6.4" height="6.4" viewBox="0 0 10 10"><rect x="0.600" y="0.600" width="8.800" height="8.800" fill="#fff" stroke="#6c6c6c" stroke-width="1.250"/><path d="M2.300 5.200L4.300 7.300L7.900 2.700" fill="none" stroke="#484848" stroke-width="1.350"/></svg>
<div class="t" style="left:30px;top:330px;transform:translate(0.1px,0.83px) rotate(0.1deg) scaleX(0.92);font-size:7px;line-height:7px;color:#0c0c0c;">Dowody sprzedaży</div>
<svg style="left:104.600px;top:281.500px" width="4.600" height="9.500" viewBox="0 0 5 10"><path d="M4.300 0.500L0.800 5L4.300 9.500" stroke="#3563b8" stroke-width="1.150" fill="none"/></svg>
<svg style="left:109px;top:95px" width="358" height="67"><rect x="0.2" y="0.4" width="357.7" height="66.5" fill="#2b579a"/></svg>
<svg style="left:109px;top:95px;overflow:hidden" width="50" height="67" viewBox="-0.200 -0.400 50 67"><circle cx="23" cy="25.800" r="15.500" fill="none" stroke="#4c7ac1" stroke-width="3.900"/><circle cx="23" cy="25.800" r="10.500" fill="#6b8ec7"/><path d="M21.800 18c3.300 .3 5.600 2 6.600 4.600" stroke="#2b579a" stroke-width="1.400" fill="none" stroke-linecap="round"/><circle cx="29.800" cy="24.700" r="0.800" fill="#2b579a"/><path d="M11.400 50L1 68.500" stroke="#6a8dc8" stroke-width="2.300" fill="none"/></svg>
<svg style="left:153px;top:98px" width="312" height="12"><rect x="0.7" y="0.35" width="310.7" height="10.5" fill="#fff" stroke="#d4dbe8" stroke-width="0.4"/></svg>
<div class="t" style="left:155px;top:99px;transform:translate(0.5px,0.94px) rotate(0.1deg) scaleX(0.862);font-size:6.3px;line-height:7px;color:#111;">Wszystkie pola</div>
<svg style="left:457.8px;top:102.5px" width="4.8" height="3" viewBox="0 0 50 32"><path d="M4 4L25 26L46 4" stroke="#444" stroke-width="8" fill="none"/></svg>
<svg style="left:153px;top:110px" width="312" height="11"><rect x="0.7" y="1.15" width="310.7" height="9.1" fill="#fff" stroke="#d4dbe8" stroke-width="0.4"/></svg>
<svg style="left:156px;top:112px" width="1" height="7"><rect x="0.3" y="0.8" width="0.6" height="5.8" fill="#000"/></svg>
<svg style="left:153px;top:125px" width="7" height="7"><rect x="0.6" y="0.7" width="5.9" height="5.9" fill="#fff"/></svg>
<div class="t" style="left:161px;top:125px;transform:translate(0.7px,0.04px) rotate(0.1deg) scaleX(0.866);font-size:6.3px;line-height:7px;color:#f4f6fb;">szukanie po pierwszych znakach</div>
<svg style="left:153px;top:136px" width="312" height="9"><rect x="0.7" y="0.25" width="310.7" height="8.5" fill="#fff" stroke="#d4dbe8" stroke-width="0.4"/></svg>
<div class="t" style="left:156px;top:136px;transform:translate(0.7px,0.64px) rotate(0.1deg) scaleX(0.874);font-size:6.3px;line-height:7px;color:#929292;">Szukaj pozycji na dokumencie (Ctrl + P)</div>
<svg style="left:153px;top:147px" width="87" height="10"><rect x="0.7" y="0.35" width="85.2" height="8.5" fill="#fff" stroke="#d4dbe8" stroke-width="0.4"/></svg>
<div class="t" style="left:156px;top:148px;transform:translate(0.7px,0.04px) rotate(0.1deg) scaleX(0.88);font-size:6.3px;line-height:7px;color:#929292;">Szukaj kod towaru</div>
<svg style="left:240px;top:147px" width="87" height="10"><rect x="1.1" y="0.35" width="85.2" height="8.5" fill="#fff" stroke="#d4dbe8" stroke-width="0.4"/></svg>
<div class="t" style="left:244px;top:148px;transform:translate(0.2px,0.04px) rotate(0.1deg) scaleX(0.895);font-size:6.3px;line-height:7px;color:#929292;">Szukaj nr katalogowy</div>
<svg style="left:329px;top:147px" width="87" height="10"><rect x="0.4" y="0.35" width="85.7" height="8.5" fill="#fff" stroke="#d4dbe8" stroke-width="0.4"/></svg>
<div class="t" style="left:332px;top:148px;transform:translate(0.5px,0.04px) rotate(0.1deg) scaleX(0.835);font-size:6.3px;line-height:7px;color:#929292;">Szukaj kod PKWiU/CN</div>
<svg style="left:449.700px;top:161.900px" width="8.800" height="5" viewBox="0 0 9 5"><path d="M0.500 4.600L4.500 0.800L8.500 4.600" stroke="#3d67b0" stroke-width="1.150" fill="none"/></svg>
<svg style="left:469px;top:95px" width="331" height="67"><rect x="0.4" y="0.4" width="330.6" height="66.5" fill="#2b579a"/></svg>
<div class="t" style="left:482px;top:99px;transform:translate(0.5px,0.94px) rotate(0.1deg) scaleX(0.887);font-size:6.3px;line-height:7px;color:#f4f6fb;">Rejestr</div>
<svg style="left:501px;top:98px" width="53" height="12"><rect x="0.9" y="0.55" width="51.5" height="10.3" fill="#fff" stroke="#d4dbe8" stroke-width="0.4"/></svg>
<div class="t" style="left:504px;top:99px;transform:translate(0.5px,0.94px) rotate(0.1deg) scaleX(0.882);font-size:6.3px;line-height:7px;color:#111;">-- Wszystkie --</div>
<svg style="left:546.9px;top:102.5px" width="4.6" height="2.9" viewBox="0 0 50 32"><path d="M4 4L25 26L46 4" stroke="#444" stroke-width="8" fill="none"/></svg>
<div class="t" style="left:572px;top:99px;transform:translate(0px,0.94px) rotate(0.1deg) scaleX(0.905);font-size:6.3px;line-height:7px;color:#f4f6fb;">Zapłaty</div>
<svg style="left:592px;top:98px" width="90" height="12"><rect x="0.2" y="0.55" width="88.7" height="10.3" fill="#fff" stroke="#d4dbe8" stroke-width="0.4"/></svg>
<div class="t" style="left:595px;top:99px;transform:translate(0px,0.94px) rotate(0.1deg) scaleX(0.882);font-size:6.3px;line-height:7px;color:#111;">-- Wszystkie --</div>
<svg style="left:674.8px;top:102.5px" width="4.8" height="3" viewBox="0 0 50 32"><path d="M4 4L25 26L46 4" stroke="#444" stroke-width="8" fill="none"/></svg>
<div class="t" style="left:485px;top:112px;transform:translate(0.7px,0.54px) rotate(0.1deg) scaleX(0.828);font-size:6.3px;line-height:7px;color:#f4f6fb;">Grupa</div>
<svg style="left:501px;top:110px" width="181" height="12"><rect x="0.9" y="1.15" width="179" height="10.1" fill="#fff" stroke="#d4dbe8" stroke-width="0.4"/></svg>
<div class="t" style="left:504px;top:112px;transform:translate(0.5px,0.54px) rotate(0.1deg) scaleX(0.904);font-size:6.3px;line-height:7px;color:#111;">-- Wszystkie grupy --</div>
<svg style="left:674.8px;top:115px" width="4.8" height="3" viewBox="0 0 50 32"><path d="M4 4L25 26L46 4" stroke="#444" stroke-width="8" fill="none"/></svg>
<div class="t" style="left:479px;top:126px;transform:translate(0.5px,0.14px) rotate(0.1deg) scaleX(0.821);font-size:6.3px;line-height:7px;color:#f4f6fb;">Znacznik</div>
<svg style="left:501px;top:123px" width="181" height="14"><rect x="0.9" y="0.75" width="179" height="12.5" fill="#fff" stroke="#d4dbe8" stroke-width="0.4"/></svg>
<div class="t" style="left:517px;top:126px;transform:translate(0.5px,0.34px) rotate(0.1deg) scaleX(0.887);font-size:6.3px;line-height:7px;color:#111;">-- Wszystkie --</div>
<svg style="left:674.8px;top:128.7px" width="4.8" height="3" viewBox="0 0 50 32"><path d="M4 4L25 26L46 4" stroke="#444" stroke-width="8" fill="none"/></svg>
<svg style="left:502px;top:152px" width="7" height="7"><rect x="0.1" y="0.3" width="6.3" height="6.3" fill="#fff"/></svg>
<div class="t" style="left:510px;top:152px;transform:translate(0px,0.14px) rotate(0.1deg) scaleX(0.885);font-size:6.3px;line-height:7px;color:#f4f6fb;">pokaż tylko dok.</div>
<div class="t" style="left:552px;top:152px;transform:translate(0.5px,0.16px) rotate(0.1deg) scaleX(0.949);font-size:6.4px;line-height:7px;color:#fff;font-weight:bold;">Mechanizm podzielonej płatności</div>
<svg style="left:686px;top:152px" width="7" height="7"><rect x="0.5" y="0.3" width="6.3" height="6.3" fill="#fff"/></svg>
<div class="t" style="left:695px;top:152px;transform:translate(0px,0.14px) rotate(0.1deg) scaleX(0.897);font-size:6.3px;line-height:7px;color:#f4f6fb;">pokaż tylko wybrane</div>
<svg style="left:686px;top:98px" width="109" height="24"><rect x="1.2" y="0.7" width="107" height="22" fill="#fff" stroke="#9aa7bd" stroke-width="1"/></svg>
<div class="t" style="left:690px;top:99px;transform:translate(0.5px,0.59px) rotate(0.1deg) scaleX(0.988);font-size:6.5px;line-height:7px;color:#555;">Bieżący rok</div>
<div class="t" style="left:690px;top:110px;transform:translate(0.5px,0.97px) rotate(0.1deg) scaleX(1.062);font-size:7.2px;line-height:9px;color:#111;font-weight:bold;">2023-01-01 - 2023-12-31</div>
<svg style="left:783px;top:98px" width="12" height="23"><linearGradient id="g1" x1="0" y1="0" x2="0" y2="1"><stop offset="0%" stop-color="#f6f6f6"/><stop offset="100%" stop-color="#d2d2d2"/></linearGradient><rect x="0.4" y="0.5" width="11.1" height="22.4" fill="url(#g1)"/><rect x="0.4" y="0.5" width="0.8" height="22.4" fill="#b0b0b0"/></svg>
<svg style="left:787.4px;top:108px" width="3.6" height="2.3" viewBox="0 0 44 26"><path d="M0 0H44L22 26Z" fill="#1a1a1a"/></svg>
<div class="t" style="left:686px;top:126px;transform:translate(0.2px,0.34px) rotate(0.1deg) scaleX(0.874);font-size:6.3px;line-height:7px;color:#f4f6fb;">Filtruj po dacie</div>
<svg style="left:723px;top:124px" width="72" height="12"><rect x="0.6" y="0.95" width="71.2" height="10.1" fill="#fff" stroke="#d4dbe8" stroke-width="0.4"/></svg>
<div class="t" style="left:725px;top:126px;transform:translate(0.7px,0.34px) rotate(0.1deg) scaleX(0.878);font-size:6.3px;line-height:7px;color:#111;">Wystawienia</div>
<svg style="left:788.3px;top:128.7px" width="4.8" height="3" viewBox="0 0 50 32"><path d="M4 4L25 26L46 4" stroke="#444" stroke-width="8" fill="none"/></svg>
<div class="t" style="left:109px;top:169px;transform:translate(0.3px,0.21px) rotate(0.1deg) scaleX(0.887);font-size:6.2px;line-height:7px;color:#0c0ce4;">zaznacz wszystko</div>
<svg style="left:109px;top:175px" width="45" height="2"><rect x="0.3" y="0.7" width="44" height="0.65" fill="#1818e6"/></svg>
<div class="t" style="left:155px;top:169px;transform:translate(0px,0.21px) rotate(0.1deg) scaleX(0.9);font-size:6.2px;line-height:7px;color:#222;">/</div>
<div class="t" style="left:158px;top:169px;transform:translate(0.2px,0.21px) rotate(0.1deg) scaleX(0.887);font-size:6.2px;line-height:7px;color:#0c0ce4;">odznacz wszystko</div>
<svg style="left:158px;top:175px" width="45" height="2"><rect x="0.2" y="0.7" width="44.3" height="0.65" fill="#1818e6"/></svg>
<div class="t" style="left:703px;top:169px;transform:translate(0px,0.21px) rotate(0.1deg) scaleX(0.903);font-size:6.2px;line-height:7px;color:#0c0ce4;">ustaw widok</div>
<svg style="left:703px;top:175px" width="31" height="2"><rect x="0" y="0.7" width="30.5" height="0.65" fill="#1818e6"/></svg>
<div class="t" style="left:735px;top:169px;transform:translate(0.3px,0.21px) rotate(0.1deg) scaleX(0.9);font-size:6.2px;line-height:7px;color:#222;">/</div>
<div class="t" style="left:738px;top:169px;transform:translate(0.8px,0.21px) rotate(0.1deg) scaleX(0.918);font-size:6.2px;line-height:7px;color:#0c0ce4;">resetuj widok</div>
<svg style="left:738px;top:175px" width="34" height="2"><rect x="0.8" y="0.7" width="33.2" height="0.65" fill="#1818e6"/></svg>
<div class="t" style="left:773px;top:169px;transform:translate(0.8px,0.21px) rotate(0.1deg) scaleX(0.9);font-size:6.2px;line-height:7px;color:#222;">/</div>
<div class="t" style="left:777px;top:169px;transform:translate(0.3px,0.21px) rotate(0.1deg) scaleX(0.866);font-size:6.2px;line-height:7px;color:#0c0ce4;">odśwież</div>
<svg style="left:777px;top:175px" width="20" height="2"><rect x="0.3" y="0.7" width="19.4" height="0.65" fill="#1818e6"/></svg>
<svg style="left:109px;top:177px" width="677" height="241"><rect x="0.8" y="1.2" width="675.4" height="238.9" fill="#fff" stroke="#a9bee0" stroke-width="1"/></svg>
<svg style="left:110px;top:178px" width="11" height="240"><linearGradient id="g2" x1="0" y1="0" x2="1" y2="0"><stop offset="0%" stop-color="#d9d9d9"/><stop offset="100%" stop-color="#efefef"/></linearGradient><rect x="0" y="0.8" width="10.2" height="238.3" fill="url(#g2)"/><rect x="9.2" y="0.8" width="1" height="238.3" fill="#adc2e4"/></svg>
<div class="t" style="left:112px;top:180px;transform:translate(0.8px,0.1px) rotate(0.1deg) scaleX(0.9);font-size:6.3px;line-height:7px;color:#bababa;">A</div>
<div class="t" style="left:112px;top:189px;transform:translate(0.8px,0.2px) rotate(0.1deg) scaleX(0.9);font-size:6.3px;line-height:7px;color:#bababa;">B</div>
<div class="t" style="left:112px;top:198px;transform:translate(0.63px,0.3px) rotate(0.1deg) scaleX(0.9);font-size:6.3px;line-height:7px;color:#bababa;">C</div>
<div class="t" style="left:112px;top:207px;transform:translate(0.63px,0.4px) rotate(0.1deg) scaleX(0.9);font-size:6.3px;line-height:7px;color:#bababa;">D</div>
<div class="t" style="left:112px;top:216px;transform:translate(0.8px,0.5px) rotate(0.1deg) scaleX(0.9);font-size:6.3px;line-height:7px;color:#bababa;">E</div>
<div class="t" style="left:112px;top:225px;transform:translate(0.98px,0.6px) rotate(0.1deg) scaleX(0.9);font-size:6.3px;line-height:7px;color:#bababa;">F</div>
<div class="t" style="left:112px;top:234px;transform:translate(0.45px,0.7px) rotate(0.1deg) scaleX(0.9);font-size:6.3px;line-height:7px;color:#bababa;">G</div>
<div class="t" style="left:112px;top:243px;transform:translate(0.63px,0.8px) rotate(0.1deg) scaleX(0.9);font-size:6.3px;line-height:7px;color:#bababa;">H</div>
<div class="t" style="left:114px;top:252px;transform:translate(0.02px,0.9px) rotate(0.1deg) scaleX(0.9);font-size:6.3px;line-height:7px;color:#bababa;">I</div>
<div class="t" style="left:113px;top:261px;transform:translate(0.01px,1px) rotate(0.1deg) scaleX(0.9);font-size:6.8px;line-height:7px;color:#5a1a1a;font-weight:bold;">J</div>
<div class="t" style="left:112px;top:271px;transform:translate(0.8px,0.1px) rotate(0.1deg) scaleX(0.9);font-size:6.3px;line-height:7px;color:#bababa;">K</div>
<div class="t" style="left:113px;top:280px;transform:translate(0.15px,0.2px) rotate(0.1deg) scaleX(0.9);font-size:6.3px;line-height:7px;color:#bababa;">L</div>
<div class="t" style="left:112px;top:289px;transform:translate(0.07px,0.3px) rotate(0.1deg) scaleX(0.9);font-size:6.8px;line-height:7px;color:#1a6fd6;font-weight:bold;">M</div>
<div class="t" style="left:112px;top:298px;transform:translate(0.63px,0.4px) rotate(0.1deg) scaleX(0.9);font-size:6.3px;line-height:7px;color:#bababa;">N</div>
<div class="t" style="left:112px;top:307px;transform:translate(0.45px,0.5px) rotate(0.1deg) scaleX(0.9);font-size:6.3px;line-height:7px;color:#bababa;">O</div>
<div class="t" style="left:112px;top:316px;transform:translate(0.8px,0.6px) rotate(0.1deg) scaleX(0.9);font-size:6.3px;line-height:7px;color:#bababa;">P</div>
<div class="t" style="left:112px;top:325px;transform:translate(0.45px,0.7px) rotate(0.1deg) scaleX(0.9);font-size:6.3px;line-height:7px;color:#bababa;">Q</div>
<div class="t" style="left:112px;top:334px;transform:translate(0.63px,0.8px) rotate(0.1deg) scaleX(0.9);font-size:6.3px;line-height:7px;color:#bababa;">R</div>
<div class="t" style="left:112px;top:343px;transform:translate(0.8px,0.9px) rotate(0.1deg) scaleX(0.9);font-size:6.3px;line-height:7px;color:#bababa;">S</div>
<div class="t" style="left:112px;top:353px;transform:translate(0.82px,0px) rotate(0.1deg) scaleX(0.9);font-size:6.8px;line-height:7px;color:#222;font-weight:bold;">T</div>
<div class="t" style="left:112px;top:362px;transform:translate(0.63px,0.1px) rotate(0.1deg) scaleX(0.9);font-size:6.3px;line-height:7px;color:#bababa;">U</div>
<div class="t" style="left:112px;top:371px;transform:translate(0.8px,0.2px) rotate(0.1deg) scaleX(0.9);font-size:6.3px;line-height:7px;color:#bababa;">V</div>
<div class="t" style="left:111px;top:380px;transform:translate(0.93px,0.3px) rotate(0.1deg) scaleX(0.9);font-size:6.3px;line-height:7px;color:#bababa;">W</div>
<div class="t" style="left:112px;top:389px;transform:translate(0.8px,0.4px) rotate(0.1deg) scaleX(0.9);font-size:6.3px;line-height:7px;color:#bababa;">X</div>
<div class="t" style="left:112px;top:398px;transform:translate(0.8px,0.5px) rotate(0.1deg) scaleX(0.9);font-size:6.3px;line-height:7px;color:#bababa;">Y</div>
<div class="t" style="left:112px;top:407px;transform:translate(0.98px,0.6px) rotate(0.1deg) scaleX(0.9);font-size:6.3px;line-height:7px;color:#bababa;">Z</div>
<svg style="left:120px;top:178px" width="663" height="18"><linearGradient id="g3" x1="0" y1="0" x2="0" y2="1"><stop offset="0%" stop-color="#ffffff"/><stop offset="55%" stop-color="#f7f7f7"/><stop offset="100%" stop-color="#ebebeb"/></linearGradient><rect x="0.2" y="0.8" width="662.3" height="16.7" fill="url(#g3)"/><rect x="0.2" y="16.6" width="662.3" height="0.9" fill="#a9a9a9"/></svg>
<svg style="left:140px;top:178px" width="2" height="18"><rect x="0.8" y="0.8" width="0.8" height="16.7" fill="#c8c8c8"/></svg>
<svg style="left:172px;top:178px" width="1" height="18"><rect x="0.1" y="0.8" width="0.8" height="16.7" fill="#c8c8c8"/></svg>
<svg style="left:249px;top:178px" width="2" height="18"><rect x="0.6" y="0.8" width="0.8" height="16.7" fill="#c8c8c8"/></svg>
<svg style="left:410px;top:178px" width="2" height="18"><rect x="0.8" y="0.8" width="0.8" height="16.7" fill="#c8c8c8"/></svg>
<svg style="left:452px;top:178px" width="1" height="18"><rect x="0.1" y="0.8" width="0.8" height="16.7" fill="#c8c8c8"/></svg>
<svg style="left:493px;top:178px" width="2" height="18"><rect x="0.3" y="0.8" width="0.8" height="16.7" fill="#c8c8c8"/></svg>
<svg style="left:535px;top:178px" width="1" height="18"><rect x="0.1" y="0.8" width="0.8" height="16.7" fill="#c8c8c8"/></svg>
<svg style="left:576px;top:178px" width="2" height="18"><rect x="0.3" y="0.8" width="0.8" height="16.7" fill="#c8c8c8"/></svg>
<svg style="left:627px;top:178px" width="1" height="18"><rect x="0.1" y="0.8" width="0.8" height="16.7" fill="#c8c8c8"/></svg>
<svg style="left:648px;top:178px" width="2" height="18"><rect x="0.3" y="0.8" width="0.8" height="16.7" fill="#c8c8c8"/></svg>
<svg style="left:689px;top:178px" width="1" height="18"><rect x="0.1" y="0.8" width="0.8" height="16.7" fill="#c8c8c8"/></svg>
<svg style="left:725px;top:178px" width="2" height="18"><rect x="0.3" y="0.8" width="0.8" height="16.7" fill="#c8c8c8"/></svg>
<svg style="left:782px;top:178px" width="1" height="18"><rect x="0.1" y="0.8" width="0.8" height="16.7" fill="#c8c8c8"/></svg>
<div class="t" style="left:129px;top:179px;transform:translate(0.2px,0.81px) rotate(0.1deg) scaleX(0.9);font-size:6.2px;line-height:7px;color:#222;">0</div>
<div class="t" style="left:146px;top:179px;transform:translate(0.2px,0.81px) rotate(0.1deg) scaleX(0.859);font-size:6.2px;line-height:7px;color:#222;">Znacznik</div>
<div class="t" style="left:173px;top:179px;transform:translate(0.7px,0.81px) rotate(0.1deg) scaleX(0.849);font-size:6.2px;line-height:7px;color:#222;">Numer</div>
<div class="t" style="left:251px;top:179px;transform:translate(0.7px,0.81px) rotate(0.1deg) scaleX(0.834);font-size:6.2px;line-height:7px;color:#222;">Nazwa</div>
<div class="t" style="left:413px;top:179px;transform:translate(0px,0.81px) rotate(0.1deg) scaleX(0.864);font-size:6.2px;line-height:7px;color:#222;">Nip klienta</div>
<div class="t" style="left:471px;top:179px;transform:translate(0.7px,0.81px) rotate(0.1deg) scaleX(0.902);font-size:6.2px;line-height:7px;color:#222;">Wartość</div>
<div class="t" style="left:507px;top:179px;transform:translate(0px,0.81px) rotate(0.1deg) scaleX(0.911);font-size:6.2px;line-height:7px;color:#222;">Do zapłaty</div>
<div class="t" style="left:563px;top:179px;transform:translate(0px,0.81px) rotate(0.1deg) scaleX(0.878);font-size:6.2px;line-height:7px;color:#222;">Data</div>
<svg style="left:557px;top:181px" width="5.600" height="5" viewBox="0 0 54 48"><path d="M0 0H54L27 48Z" fill="#1f3a60"/></svg>
<div class="t" style="left:544px;top:186px;transform:translate(0.5px,0.21px) rotate(0.1deg) scaleX(0.898);font-size:6.2px;line-height:7px;color:#222;">wystawienia</div>
<div class="t" style="left:578px;top:179px;transform:translate(0.2px,0.81px) rotate(0.1deg) scaleX(0.88);font-size:6.2px;line-height:7px;color:#222;">Forma płatności</div>
<div class="t" style="left:639px;top:179px;transform:translate(0.2px,0.81px) rotate(0.1deg) scaleX(0.838);font-size:6.2px;line-height:7px;color:#222;">Dni</div>
<div class="t" style="left:652px;top:179px;transform:translate(0px,0.81px) rotate(0.1deg) scaleX(0.901);font-size:6.2px;line-height:7px;color:#222;">Termin zapłaty</div>
<div class="t" style="left:712px;top:179px;transform:translate(0.5px,0.81px) rotate(0.1deg) scaleX(0.893);font-size:6.2px;line-height:7px;color:#222;">Data</div>
<div class="t" style="left:699px;top:186px;transform:translate(0.2px,0.21px) rotate(0.1deg) scaleX(0.885);font-size:6.2px;line-height:7px;color:#222;">sprzedaży</div>
<div class="t" style="left:747px;top:179px;transform:translate(0px,0.81px) rotate(0.1deg) scaleX(0.846);font-size:6.2px;line-height:7px;color:#222;">Opcje</div>
<svg style="left:120px;top:195px" width="663" height="12"><rect x="0.2" y="0.5" width="662.3" height="11.29" fill="#a9c9ef"/><rect x="0.2" y="10.99" width="662.3" height="0.8" fill="rgba(120,120,120,0.300)"/></svg>
<svg style="left:140px;top:195px" width="2" height="12"><rect x="0.7" y="0.5" width="1" height="11.29" fill="rgba(60,70,90,0.13)"/></svg>
<svg style="left:172px;top:195px" width="1" height="12"><rect x="0" y="0.5" width="1" height="11.29" fill="rgba(60,70,90,0.13)"/></svg>
<svg style="left:249px;top:195px" width="2" height="12"><rect x="0.5" y="0.5" width="1" height="11.29" fill="rgba(60,70,90,0.13)"/></svg>
<svg style="left:410px;top:195px" width="2" height="12"><rect x="0.7" y="0.5" width="1" height="11.29" fill="rgba(60,70,90,0.13)"/></svg>
<svg style="left:452px;top:195px" width="1" height="12"><rect x="0" y="0.5" width="1" height="11.29" fill="rgba(60,70,90,0.13)"/></svg>
<svg style="left:493px;top:195px" width="2" height="12"><rect x="0.2" y="0.5" width="1" height="11.29" fill="rgba(60,70,90,0.13)"/></svg>
<svg style="left:535px;top:195px" width="1" height="12"><rect x="0" y="0.5" width="1" height="11.29" fill="rgba(60,70,90,0.13)"/></svg>
<svg style="left:576px;top:195px" width="2" height="12"><rect x="0.2" y="0.5" width="1" height="11.29" fill="rgba(60,70,90,0.13)"/></svg>
<svg style="left:627px;top:195px" width="1" height="12"><rect x="0" y="0.5" width="1" height="11.29" fill="rgba(60,70,90,0.13)"/></svg>
<svg style="left:648px;top:195px" width="2" height="12"><rect x="0.2" y="0.5" width="1" height="11.29" fill="rgba(60,70,90,0.13)"/></svg>
<svg style="left:689px;top:195px" width="1" height="12"><rect x="0" y="0.5" width="1" height="11.29" fill="rgba(60,70,90,0.13)"/></svg>
<svg style="left:725px;top:195px" width="2" height="12"><rect x="0.2" y="0.5" width="1" height="11.29" fill="rgba(60,70,90,0.13)"/></svg>
<svg style="left:782px;top:195px" width="1" height="12"><rect x="0" y="0.5" width="1" height="11.29" fill="rgba(60,70,90,0.13)"/></svg>
<svg style="left:127px;top:197px" width="7" height="7"><rect x="0.4" y="0.4" width="6" height="5.9" fill="#fff" stroke="#7d8794" stroke-width="0.6"/></svg>
<div class="t" style="left:174px;top:197px;transform:translate(0.2px,0.24px) rotate(0.1deg) scaleX(0.887);font-size:6.3px;line-height:7px;color:#000;">FV/4/2023</div>
<div class="t" style="left:251px;top:197px;transform:translate(0.7px,0.24px) rotate(0.1deg) scaleX(0.883);font-size:6.3px;line-height:7px;color:#000;">Krzysztof Hibner</div>
<div class="t" style="left:481px;top:197px;transform:translate(0.38px,0.24px) rotate(0.1deg) scaleX(0.907);font-size:6.3px;line-height:7px;color:#000;">9,84</div>
<div class="t" style="left:522px;top:197px;transform:translate(0.58px,0.24px) rotate(0.1deg) scaleX(0.907);font-size:6.3px;line-height:7px;color:#000;">0,00</div>
<div class="t" style="left:546px;top:197px;transform:translate(0.2px,0.24px) rotate(0.1deg) scaleX(0.907);font-size:6.3px;line-height:7px;color:#000;">2023-11-02</div>
<div class="t" style="left:578px;top:197px;transform:translate(0.2px,0.24px) rotate(0.1deg) scaleX(0.895);font-size:6.3px;line-height:7px;color:#000;">gotówka</div>
<div class="t" style="left:643px;top:197px;transform:translate(0.5px,0.24px) rotate(0.1deg) scaleX(0.9);font-size:6.3px;line-height:7px;color:#000;">0</div>
<div class="t" style="left:659px;top:197px;transform:translate(0.9px,0.24px) rotate(0.1deg) scaleX(0.907);font-size:6.3px;line-height:7px;color:#000;">2023-11-02</div>
<div class="t" style="left:695px;top:197px;transform:translate(0.4px,0.24px) rotate(0.1deg) scaleX(0.907);font-size:6.3px;line-height:7px;color:#000;">2023-11-02</div>
<svg style="left:731.700px;top:196.2px" width="44" height="10" viewBox="0 0 44 10"><circle cx="5" cy="5" r="3.600" fill="#e8eef6" stroke="#a9b8cc" stroke-width="0.700"/><rect x="4.500" y="4.200" width="1" height="2.900" fill="#5b86c4"/><rect x="4.500" y="2.600" width="1" height="1" fill="#5b86c4"/><rect x="12.200" y="1.500" width="7" height="7" fill="url(#sq)" stroke="#a8a8a8" stroke-width="0.600"/><path d="M23.500 7.600L27.300 3.400" stroke="#8f9cc6" stroke-width="1.700" stroke-linecap="butt"/><path d="M27.300 3.400L28.500 2.100" stroke="#e8a02c" stroke-width="1.700"/><path d="M28.300 2.300L29 1.600" stroke="#e03a2a" stroke-width="1.700" stroke-linecap="round"/><path d="M22.500 8.700L23.200 7.100L24.200 8z" fill="#2a2a2a" stroke="#2a2a2a" stroke-width="0.400"/><path d="M33.600 2L39.600 8M39.600 2L33.600 8" stroke="#f46e54" stroke-width="1.900" stroke-linecap="butt"/></svg>
<svg style="left:120px;top:206px" width="663" height="13"><rect x="0.2" y="0.79" width="662.3" height="11.29" fill="#fff"/><rect x="0.2" y="11.28" width="662.3" height="0.8" fill="rgba(120,120,120,0.300)"/></svg>
<svg style="left:535px;top:206px" width="42" height="12"><rect x="0.9" y="0.79" width="40.4" height="10.49" fill="#ffff80"/></svg>
<svg style="left:140px;top:206px" width="2" height="13"><rect x="0.7" y="0.79" width="1" height="11.29" fill="rgba(60,70,90,0.13)"/></svg>
<svg style="left:172px;top:206px" width="1" height="13"><rect x="0" y="0.79" width="1" height="11.29" fill="rgba(60,70,90,0.13)"/></svg>
<svg style="left:249px;top:206px" width="2" height="13"><rect x="0.5" y="0.79" width="1" height="11.29" fill="rgba(60,70,90,0.13)"/></svg>
<svg style="left:410px;top:206px" width="2" height="13"><rect x="0.7" y="0.79" width="1" height="11.29" fill="rgba(60,70,90,0.13)"/></svg>
<svg style="left:452px;top:206px" width="1" height="13"><rect x="0" y="0.79" width="1" height="11.29" fill="rgba(60,70,90,0.13)"/></svg>
<svg style="left:493px;top:206px" width="2" height="13"><rect x="0.2" y="0.79" width="1" height="11.29" fill="rgba(60,70,90,0.13)"/></svg>
<svg style="left:535px;top:206px" width="1" height="13"><rect x="0" y="0.79" width="1" height="11.29" fill="rgba(60,70,90,0.13)"/></svg>
<svg style="left:576px;top:206px" width="2" height="13"><rect x="0.2" y="0.79" width="1" height="11.29" fill="rgba(60,70,90,0.13)"/></svg>
<svg style="left:627px;top:206px" width="1" height="13"><rect x="0" y="0.79" width="1" height="11.29" fill="rgba(60,70,90,0.13)"/></svg>
<svg style="left:648px;top:206px" width="2" height="13"><rect x="0.2" y="0.79" width="1" height="11.29" fill="rgba(60,70,90,0.13)"/></svg>
<svg style="left:689px;top:206px" width="1" height="13"><rect x="0" y="0.79" width="1" height="11.29" fill="rgba(60,70,90,0.13)"/></svg>
<svg style="left:725px;top:206px" width="2" height="13"><rect x="0.2" y="0.79" width="1" height="11.29" fill="rgba(60,70,90,0.13)"/></svg>
<svg style="left:782px;top:206px" width="1" height="13"><rect x="0" y="0.79" width="1" height="11.29" fill="rgba(60,70,90,0.13)"/></svg>
<svg style="left:127px;top:208px" width="7" height="7"><rect x="0.4" y="0.69" width="6" height="5.9" fill="#fff" stroke="#7d8794" stroke-width="0.6"/></svg>
<div class="t" style="left:174px;top:208px;transform:translate(0.2px,0.53px) rotate(0.1deg) scaleX(0.884);font-size:6.3px;line-height:7px;color:#000;">ZAL/1/2023</div>
<div class="t" style="left:251px;top:208px;transform:translate(0.7px,0.53px) rotate(0.1deg) scaleX(0.834);font-size:6.3px;line-height:7px;color:#000;">Tomasz Kowalski</div>
<div class="t" style="left:470px;top:208px;transform:translate(0.26px,0.53px) rotate(0.1deg) scaleX(0.907);font-size:6.3px;line-height:7px;color:#000;">1 000,00</div>
<div class="t" style="left:522px;top:208px;transform:translate(0.58px,0.53px) rotate(0.1deg) scaleX(0.907);font-size:6.3px;line-height:7px;color:#000;">0,00</div>
<div class="t" style="left:545px;top:208px;transform:translate(0.78px,0.53px) rotate(0.1deg) scaleX(0.907);font-size:6.3px;line-height:7px;color:#000;">2023-09-24</div>
<div class="t" style="left:578px;top:208px;transform:translate(0.2px,0.53px) rotate(0.1deg) scaleX(0.895);font-size:6.3px;line-height:7px;color:#000;">gotówka</div>
<div class="t" style="left:643px;top:208px;transform:translate(0.5px,0.53px) rotate(0.1deg) scaleX(0.9);font-size:6.3px;line-height:7px;color:#000;">0</div>
<div class="t" style="left:659px;top:208px;transform:translate(0.48px,0.53px) rotate(0.1deg) scaleX(0.907);font-size:6.3px;line-height:7px;color:#000;">2023-09-24</div>
<div class="t" style="left:694px;top:208px;transform:translate(0.98px,0.53px) rotate(0.1deg) scaleX(0.907);font-size:6.3px;line-height:7px;color:#000;">2023-09-24</div>
<svg style="left:731.700px;top:207.49px" width="44" height="10" viewBox="0 0 44 10"><circle cx="5" cy="5" r="3.600" fill="#e8eef6" stroke="#a9b8cc" stroke-width="0.700"/><rect x="4.500" y="4.200" width="1" height="2.900" fill="#5b86c4"/><rect x="4.500" y="2.600" width="1" height="1" fill="#5b86c4"/><rect x="12.200" y="1.500" width="7" height="7" fill="url(#sq)" stroke="#a8a8a8" stroke-width="0.600"/><path d="M23.500 7.600L27.300 3.400" stroke="#8f9cc6" stroke-width="1.700" stroke-linecap="butt"/><path d="M27.300 3.400L28.500 2.100" stroke="#e8a02c" stroke-width="1.700"/><path d="M28.300 2.300L29 1.600" stroke="#e03a2a" stroke-width="1.700" stroke-linecap="round"/><path d="M22.500 8.700L23.200 7.100L24.200 8z" fill="#2a2a2a" stroke="#2a2a2a" stroke-width="0.400"/><path d="M33.600 2L39.600 8M39.600 2L33.600 8" stroke="#f46e54" stroke-width="1.900" stroke-linecap="butt"/></svg>
<svg style="left:120px;top:218px" width="663" height="12"><rect x="0.2" y="0.08" width="662.3" height="11.29" fill="#a8f0cd"/><rect x="0.2" y="10.57" width="662.3" height="0.8" fill="rgba(120,120,120,0.300)"/></svg>
<svg style="left:140px;top:218px" width="2" height="12"><rect x="0.7" y="0.08" width="1" height="11.29" fill="rgba(60,70,90,0.13)"/></svg>
<svg style="left:172px;top:218px" width="1" height="12"><rect x="0" y="0.08" width="1" height="11.29" fill="rgba(60,70,90,0.13)"/></svg>
<svg style="left:249px;top:218px" width="2" height="12"><rect x="0.5" y="0.08" width="1" height="11.29" fill="rgba(60,70,90,0.13)"/></svg>
<svg style="left:410px;top:218px" width="2" height="12"><rect x="0.7" y="0.08" width="1" height="11.29" fill="rgba(60,70,90,0.13)"/></svg>
<svg style="left:452px;top:218px" width="1" height="12"><rect x="0" y="0.08" width="1" height="11.29" fill="rgba(60,70,90,0.13)"/></svg>
<svg style="left:493px;top:218px" width="2" height="12"><rect x="0.2" y="0.08" width="1" height="11.29" fill="rgba(60,70,90,0.13)"/></svg>
<svg style="left:535px;top:218px" width="1" height="12"><rect x="0" y="0.08" width="1" height="11.29" fill="rgba(60,70,90,0.13)"/></svg>
<svg style="left:576px;top:218px" width="2" height="12"><rect x="0.2" y="0.08" width="1" height="11.29" fill="rgba(60,70,90,0.13)"/></svg>
<svg style="left:627px;top:218px" width="1" height="12"><rect x="0" y="0.08" width="1" height="11.29" fill="rgba(60,70,90,0.13)"/></svg>
<svg style="left:648px;top:218px" width="2" height="12"><rect x="0.2" y="0.08" width="1" height="11.29" fill="rgba(60,70,90,0.13)"/></svg>
<svg style="left:689px;top:218px" width="1" height="12"><rect x="0" y="0.08" width="1" height="11.29" fill="rgba(60,70,90,0.13)"/></svg>
<svg style="left:725px;top:218px" width="2" height="12"><rect x="0.2" y="0.08" width="1" height="11.29" fill="rgba(60,70,90,0.13)"/></svg>
<svg style="left:782px;top:218px" width="1" height="12"><rect x="0" y="0.08" width="1" height="11.29" fill="rgba(60,70,90,0.13)"/></svg>
<svg style="left:127px;top:219px" width="7" height="8"><rect x="0.4" y="0.98" width="6" height="5.9" fill="#fff" stroke="#7d8794" stroke-width="0.6"/></svg>
<div class="t" style="left:174px;top:219px;transform:translate(0.2px,0.82px) rotate(0.1deg) scaleX(0.875);font-size:6.3px;line-height:7px;color:#000;">RZL/1/2023</div>
<div class="t" style="left:251px;top:219px;transform:translate(0.7px,0.82px) rotate(0.1deg) scaleX(0.834);font-size:6.3px;line-height:7px;color:#000;">Tomasz Kowalski</div>
<div class="t" style="left:475px;top:219px;transform:translate(0.03px,0.82px) rotate(0.1deg) scaleX(0.907);font-size:6.3px;line-height:7px;color:#000;">107,00</div>
<div class="t" style="left:522px;top:219px;transform:translate(0.58px,0.82px) rotate(0.1deg) scaleX(0.907);font-size:6.3px;line-height:7px;color:#000;">0,00</div>
<div class="t" style="left:545px;top:219px;transform:translate(0.78px,0.82px) rotate(0.1deg) scaleX(0.907);font-size:6.3px;line-height:7px;color:#000;">2023-09-24</div>
<div class="t" style="left:578px;top:219px;transform:translate(0.2px,0.82px) rotate(0.1deg) scaleX(0.895);font-size:6.3px;line-height:7px;color:#000;">gotówka</div>
<div class="t" style="left:643px;top:219px;transform:translate(0.5px,0.82px) rotate(0.1deg) scaleX(0.9);font-size:6.3px;line-height:7px;color:#000;">0</div>
<div class="t" style="left:659px;top:219px;transform:translate(0.48px,0.82px) rotate(0.1deg) scaleX(0.907);font-size:6.3px;line-height:7px;color:#000;">2023-09-24</div>
<div class="t" style="left:694px;top:219px;transform:translate(0.98px,0.82px) rotate(0.1deg) scaleX(0.907);font-size:6.3px;line-height:7px;color:#000;">2023-09-24</div>
<svg style="left:731.700px;top:218.78px" width="44" height="10" viewBox="0 0 44 10"><circle cx="5" cy="5" r="3.600" fill="#e8eef6" stroke="#a9b8cc" stroke-width="0.700"/><rect x="4.500" y="4.200" width="1" height="2.900" fill="#5b86c4"/><rect x="4.500" y="2.600" width="1" height="1" fill="#5b86c4"/><rect x="12.200" y="1.500" width="7" height="7" fill="url(#sq)" stroke="#a8a8a8" stroke-width="0.600"/><path d="M23.500 7.600L27.300 3.400" stroke="#8f9cc6" stroke-width="1.700" stroke-linecap="butt"/><path d="M27.300 3.400L28.500 2.100" stroke="#e8a02c" stroke-width="1.700"/><path d="M28.300 2.300L29 1.600" stroke="#e03a2a" stroke-width="1.700" stroke-linecap="round"/><path d="M22.500 8.700L23.200 7.100L24.200 8z" fill="#2a2a2a" stroke="#2a2a2a" stroke-width="0.400"/><path d="M33.600 2L39.600 8M39.600 2L33.600 8" stroke="#f46e54" stroke-width="1.900" stroke-linecap="butt"/></svg>
<svg style="left:120px;top:229px" width="663" height="12"><rect x="0.2" y="0.37" width="662.3" height="11.29" fill="#fff"/><rect x="0.2" y="10.86" width="662.3" height="0.8" fill="rgba(120,120,120,0.300)"/></svg>
<svg style="left:535px;top:229px" width="42" height="11"><rect x="0.9" y="0.37" width="40.4" height="10.49" fill="#ffff80"/></svg>
<svg style="left:140px;top:229px" width="2" height="12"><rect x="0.7" y="0.37" width="1" height="11.29" fill="rgba(60,70,90,0.13)"/></svg>
<svg style="left:172px;top:229px" width="1" height="12"><rect x="0" y="0.37" width="1" height="11.29" fill="rgba(60,70,90,0.13)"/></svg>
<svg style="left:249px;top:229px" width="2" height="12"><rect x="0.5" y="0.37" width="1" height="11.29" fill="rgba(60,70,90,0.13)"/></svg>
<svg style="left:410px;top:229px" width="2" height="12"><rect x="0.7" y="0.37" width="1" height="11.29" fill="rgba(60,70,90,0.13)"/></svg>
<svg style="left:452px;top:229px" width="1" height="12"><rect x="0" y="0.37" width="1" height="11.29" fill="rgba(60,70,90,0.13)"/></svg>
<svg style="left:493px;top:229px" width="2" height="12"><rect x="0.2" y="0.37" width="1" height="11.29" fill="rgba(60,70,90,0.13)"/></svg>
<svg style="left:535px;top:229px" width="1" height="12"><rect x="0" y="0.37" width="1" height="11.29" fill="rgba(60,70,90,0.13)"/></svg>
<svg style="left:576px;top:229px" width="2" height="12"><rect x="0.2" y="0.37" width="1" height="11.29" fill="rgba(60,70,90,0.13)"/></svg>
<svg style="left:627px;top:229px" width="1" height="12"><rect x="0" y="0.37" width="1" height="11.29" fill="rgba(60,70,90,0.13)"/></svg>
<svg style="left:648px;top:229px" width="2" height="12"><rect x="0.2" y="0.37" width="1" height="11.29" fill="rgba(60,70,90,0.13)"/></svg>
<svg style="left:689px;top:229px" width="1" height="12"><rect x="0" y="0.37" width="1" height="11.29" fill="rgba(60,70,90,0.13)"/></svg>
<svg style="left:725px;top:229px" width="2" height="12"><rect x="0.2" y="0.37" width="1" height="11.29" fill="rgba(60,70,90,0.13)"/></svg>
<svg style="left:782px;top:229px" width="1" height="12"><rect x="0" y="0.37" width="1" height="11.29" fill="rgba(60,70,90,0.13)"/></svg>
<svg style="left:127px;top:230px" width="7" height="8"><rect x="0.4" y="1.27" width="6" height="5.9" fill="#fff" stroke="#7d8794" stroke-width="0.6"/></svg>
<svg style="left:152px;top:230px" width="10" height="10"><rect x="0.3" y="0.97" width="9.4" height="8.8" fill="#1f5a1f"/></svg>
<div class="t" style="left:153px;top:230px;transform:translate(0.89px,0.47px) rotate(0.1deg) scaleX(0.9);font-size:8.6px;line-height:10px;color:#fff;font-weight:bold;">A</div>
<div class="t" style="left:174px;top:231px;transform:translate(0.2px,0.11px) rotate(0.1deg) scaleX(0.845);font-size:6.3px;line-height:7px;color:#1e982a;">PRO/1/2023</div>
<div class="t" style="left:251px;top:231px;transform:translate(0.7px,0.11px) rotate(0.1deg) scaleX(0.832);font-size:6.3px;line-height:7px;color:#1e982a;">Jan Kowalski</div>
<div class="t" style="left:470px;top:231px;transform:translate(0.26px,0.11px) rotate(0.1deg) scaleX(0.907);font-size:6.3px;line-height:7px;color:#1e982a;">8 058,96</div>
<div class="t" style="left:522px;top:231px;transform:translate(0.58px,0.11px) rotate(0.1deg) scaleX(0.907);font-size:6.3px;line-height:7px;color:#1e982a;">0,00</div>
<div class="t" style="left:545px;top:231px;transform:translate(0.78px,0.11px) rotate(0.1deg) scaleX(0.907);font-size:6.3px;line-height:7px;color:#1e982a;">2023-09-24</div>
<div class="t" style="left:578px;top:231px;transform:translate(0.2px,0.11px) rotate(0.1deg) scaleX(0.895);font-size:6.3px;line-height:7px;color:#1e982a;">gotówka</div>
<div class="t" style="left:643px;top:231px;transform:translate(0.5px,0.11px) rotate(0.1deg) scaleX(0.9);font-size:6.3px;line-height:7px;color:#000;">0</div>
<div class="t" style="left:659px;top:231px;transform:translate(0.48px,0.11px) rotate(0.1deg) scaleX(0.907);font-size:6.3px;line-height:7px;color:#1e982a;">2023-09-24</div>
<div class="t" style="left:694px;top:231px;transform:translate(0.98px,0.11px) rotate(0.1deg) scaleX(0.907);font-size:6.3px;line-height:7px;color:#1e982a;">2023-09-24</div>
<svg style="left:731.700px;top:230.07px" width="44" height="10" viewBox="0 0 44 10"><circle cx="5" cy="5" r="3.600" fill="#e8eef6" stroke="#a9b8cc" stroke-width="0.700"/><rect x="4.500" y="4.200" width="1" height="2.900" fill="#5b86c4"/><rect x="4.500" y="2.600" width="1" height="1" fill="#5b86c4"/><rect x="12.200" y="1.500" width="7" height="7" fill="url(#sq)" stroke="#a8a8a8" stroke-width="0.600"/><path d="M23.500 7.600L27.300 3.400" stroke="#8f9cc6" stroke-width="1.700" stroke-linecap="butt"/><path d="M27.300 3.400L28.500 2.100" stroke="#e8a02c" stroke-width="1.700"/><path d="M28.300 2.300L29 1.600" stroke="#e03a2a" stroke-width="1.700" stroke-linecap="round"/><path d="M22.500 8.700L23.200 7.100L24.200 8z" fill="#2a2a2a" stroke="#2a2a2a" stroke-width="0.400"/><path d="M33.600 2L39.600 8M39.600 2L33.600 8" stroke="#f46e54" stroke-width="1.900" stroke-linecap="butt"/></svg>
<svg style="left:120px;top:240px" width="663" height="12"><rect x="0.2" y="0.66" width="662.3" height="11.29" fill="#ffff80"/><rect x="0.2" y="11.15" width="662.3" height="0.8" fill="rgba(120,120,120,0.300)"/></svg>
<svg style="left:140px;top:240px" width="2" height="12"><rect x="0.7" y="0.66" width="1" height="11.29" fill="rgba(60,70,90,0.13)"/></svg>
<svg style="left:172px;top:240px" width="1" height="12"><rect x="0" y="0.66" width="1" height="11.29" fill="rgba(60,70,90,0.13)"/></svg>
<svg style="left:249px;top:240px" width="2" height="12"><rect x="0.5" y="0.66" width="1" height="11.29" fill="rgba(60,70,90,0.13)"/></svg>
<svg style="left:410px;top:240px" width="2" height="12"><rect x="0.7" y="0.66" width="1" height="11.29" fill="rgba(60,70,90,0.13)"/></svg>
<svg style="left:452px;top:240px" width="1" height="12"><rect x="0" y="0.66" width="1" height="11.29" fill="rgba(60,70,90,0.13)"/></svg>
<svg style="left:493px;top:240px" width="2" height="12"><rect x="0.2" y="0.66" width="1" height="11.29" fill="rgba(60,70,90,0.13)"/></svg>
<svg style="left:535px;top:240px" width="1" height="12"><rect x="0" y="0.66" width="1" height="11.29" fill="rgba(60,70,90,0.13)"/></svg>
<svg style="left:576px;top:240px" width="2" height="12"><rect x="0.2" y="0.66" width="1" height="11.29" fill="rgba(60,70,90,0.13)"/></svg>
<svg style="left:627px;top:240px" width="1" height="12"><rect x="0" y="0.66" width="1" height="11.29" fill="rgba(60,70,90,0.13)"/></svg>
<svg style="left:648px;top:240px" width="2" height="12"><rect x="0.2" y="0.66" width="1" height="11.29" fill="rgba(60,70,90,0.13)"/></svg>
<svg style="left:689px;top:240px" width="1" height="12"><rect x="0" y="0.66" width="1" height="11.29" fill="rgba(60,70,90,0.13)"/></svg>
<svg style="left:725px;top:240px" width="2" height="12"><rect x="0.2" y="0.66" width="1" height="11.29" fill="rgba(60,70,90,0.13)"/></svg>
<svg style="left:782px;top:240px" width="1" height="12"><rect x="0" y="0.66" width="1" height="11.29" fill="rgba(60,70,90,0.13)"/></svg>
<svg style="left:127px;top:242px" width="7" height="7"><rect x="0.4" y="0.56" width="6" height="5.9" fill="#fff" stroke="#7d8794" stroke-width="0.6"/></svg>
<div class="t" style="left:174px;top:242px;transform:translate(0.2px,0.4px) rotate(0.1deg) scaleX(0.887);font-size:6.3px;line-height:7px;color:#000;">FV/3/2023</div>
<div class="t" style="left:251px;top:242px;transform:translate(0.7px,0.4px) rotate(0.1deg) scaleX(0.883);font-size:6.3px;line-height:7px;color:#000;">Krzysztof Hibner</div>
<div class="t" style="left:475px;top:242px;transform:translate(0.03px,0.4px) rotate(0.1deg) scaleX(0.907);font-size:6.3px;line-height:7px;color:#000;">108,24</div>
<div class="t" style="left:522px;top:242px;transform:translate(0.58px,0.4px) rotate(0.1deg) scaleX(0.907);font-size:6.3px;line-height:7px;color:#000;">0,00</div>
<div class="t" style="left:545px;top:242px;transform:translate(0.78px,0.4px) rotate(0.1deg) scaleX(0.907);font-size:6.3px;line-height:7px;color:#000;">2023-09-24</div>
<div class="t" style="left:578px;top:242px;transform:translate(0.2px,0.4px) rotate(0.1deg) scaleX(0.895);font-size:6.3px;line-height:7px;color:#000;">gotówka</div>
<div class="t" style="left:643px;top:242px;transform:translate(0.5px,0.4px) rotate(0.1deg) scaleX(0.9);font-size:6.3px;line-height:7px;color:#000;">0</div>
<div class="t" style="left:659px;top:242px;transform:translate(0.48px,0.4px) rotate(0.1deg) scaleX(0.907);font-size:6.3px;line-height:7px;color:#000;">2023-09-24</div>
<div class="t" style="left:694px;top:242px;transform:translate(0.98px,0.4px) rotate(0.1deg) scaleX(0.907);font-size:6.3px;line-height:7px;color:#000;">2023-09-24</div>
<svg style="left:731.700px;top:241.36px" width="44" height="10" viewBox="0 0 44 10"><circle cx="5" cy="5" r="3.600" fill="#e8eef6" stroke="#a9b8cc" stroke-width="0.700"/><rect x="4.500" y="4.200" width="1" height="2.900" fill="#5b86c4"/><rect x="4.500" y="2.600" width="1" height="1" fill="#5b86c4"/><rect x="12.200" y="1.500" width="7" height="7" fill="url(#sq)" stroke="#a8a8a8" stroke-width="0.600"/><path d="M23.500 7.600L27.300 3.400" stroke="#8f9cc6" stroke-width="1.700" stroke-linecap="butt"/><path d="M27.300 3.400L28.500 2.100" stroke="#e8a02c" stroke-width="1.700"/><path d="M28.300 2.300L29 1.600" stroke="#e03a2a" stroke-width="1.700" stroke-linecap="round"/><path d="M22.500 8.700L23.200 7.100L24.200 8z" fill="#2a2a2a" stroke="#2a2a2a" stroke-width="0.400"/><path d="M33.600 2L39.600 8M39.600 2L33.600 8" stroke="#f46e54" stroke-width="1.900" stroke-linecap="butt"/></svg>
<svg style="left:120px;top:251px" width="663" height="13"><rect x="0.2" y="0.95" width="662.3" height="11.29" fill="#fff"/><rect x="0.2" y="11.44" width="662.3" height="0.8" fill="rgba(120,120,120,0.300)"/></svg>
<svg style="left:535px;top:251px" width="42" height="12"><rect x="0.9" y="0.95" width="40.4" height="10.49" fill="#ffff80"/></svg>
<svg style="left:140px;top:251px" width="2" height="13"><rect x="0.7" y="0.95" width="1" height="11.29" fill="rgba(60,70,90,0.13)"/></svg>
<svg style="left:172px;top:251px" width="1" height="13"><rect x="0" y="0.95" width="1" height="11.29" fill="rgba(60,70,90,0.13)"/></svg>
<svg style="left:249px;top:251px" width="2" height="13"><rect x="0.5" y="0.95" width="1" height="11.29" fill="rgba(60,70,90,0.13)"/></svg>
<svg style="left:410px;top:251px" width="2" height="13"><rect x="0.7" y="0.95" width="1" height="11.29" fill="rgba(60,70,90,0.13)"/></svg>
<svg style="left:452px;top:251px" width="1" height="13"><rect x="0" y="0.95" width="1" height="11.29" fill="rgba(60,70,90,0.13)"/></svg>
<svg style="left:493px;top:251px" width="2" height="13"><rect x="0.2" y="0.95" width="1" height="11.29" fill="rgba(60,70,90,0.13)"/></svg>
<svg style="left:535px;top:251px" width="1" height="13"><rect x="0" y="0.95" width="1" height="11.29" fill="rgba(60,70,90,0.13)"/></svg>
<svg style="left:576px;top:251px" width="2" height="13"><rect x="0.2" y="0.95" width="1" height="11.29" fill="rgba(60,70,90,0.13)"/></svg>
<svg style="left:627px;top:251px" width="1" height="13"><rect x="0" y="0.95" width="1" height="11.29" fill="rgba(60,70,90,0.13)"/></svg>
<svg style="left:648px;top:251px" width="2" height="13"><rect x="0.2" y="0.95" width="1" height="11.29" fill="rgba(60,70,90,0.13)"/></svg>
<svg style="left:689px;top:251px" width="1" height="13"><rect x="0" y="0.95" width="1" height="11.29" fill="rgba(60,70,90,0.13)"/></svg>
<svg style="left:725px;top:251px" width="2" height="13"><rect x="0.2" y="0.95" width="1" height="11.29" fill="rgba(60,70,90,0.13)"/></svg>
<svg style="left:782px;top:251px" width="1" height="13"><rect x="0" y="0.95" width="1" height="11.29" fill="rgba(60,70,90,0.13)"/></svg>
<svg style="left:127px;top:253px" width="7" height="8"><rect x="0.4" y="0.85" width="6" height="5.9" fill="#fff" stroke="#7d8794" stroke-width="0.6"/></svg>
<div class="t" style="left:174px;top:253px;transform:translate(0.2px,0.69px) rotate(0.1deg) scaleX(0.887);font-size:6.3px;line-height:7px;color:#000;">FV/2/2023</div>
<div class="t" style="left:251px;top:253px;transform:translate(0.7px,0.69px) rotate(0.1deg) scaleX(0.832);font-size:6.3px;line-height:7px;color:#000;">Jan Kowalski</div>
<div class="t" style="left:470px;top:253px;transform:translate(0.26px,0.69px) rotate(0.1deg) scaleX(0.907);font-size:6.3px;line-height:7px;color:#000;">1 107,00</div>
<div class="t" style="left:522px;top:253px;transform:translate(0.58px,0.69px) rotate(0.1deg) scaleX(0.907);font-size:6.3px;line-height:7px;color:#000;">0,00</div>
<div class="t" style="left:545px;top:253px;transform:translate(0.78px,0.69px) rotate(0.1deg) scaleX(0.907);font-size:6.3px;line-height:7px;color:#000;">2023-09-24</div>
<div class="t" style="left:578px;top:253px;transform:translate(0.2px,0.69px) rotate(0.1deg) scaleX(0.895);font-size:6.3px;line-height:7px;color:#000;">gotówka</div>
<div class="t" style="left:643px;top:253px;transform:translate(0.5px,0.69px) rotate(0.1deg) scaleX(0.9);font-size:6.3px;line-height:7px;color:#000;">0</div>
<div class="t" style="left:659px;top:253px;transform:translate(0.48px,0.69px) rotate(0.1deg) scaleX(0.907);font-size:6.3px;line-height:7px;color:#000;">2023-09-24</div>
<div class="t" style="left:694px;top:253px;transform:translate(0.98px,0.69px) rotate(0.1deg) scaleX(0.907);font-size:6.3px;line-height:7px;color:#000;">2023-09-24</div>
<svg style="left:731.700px;top:252.65px" width="44" height="10" viewBox="0 0 44 10"><circle cx="5" cy="5" r="3.600" fill="#e8eef6" stroke="#a9b8cc" stroke-width="0.700"/><rect x="4.500" y="4.200" width="1" height="2.900" fill="#5b86c4"/><rect x="4.500" y="2.600" width="1" height="1" fill="#5b86c4"/><rect x="12.200" y="1.500" width="7" height="7" fill="url(#sq)" stroke="#a8a8a8" stroke-width="0.600"/><path d="M23.500 7.600L27.300 3.400" stroke="#8f9cc6" stroke-width="1.700" stroke-linecap="butt"/><path d="M27.300 3.400L28.500 2.100" stroke="#e8a02c" stroke-width="1.700"/><path d="M28.300 2.300L29 1.600" stroke="#e03a2a" stroke-width="1.700" stroke-linecap="round"/><path d="M22.500 8.700L23.200 7.100L24.200 8z" fill="#2a2a2a" stroke="#2a2a2a" stroke-width="0.400"/><path d="M33.600 2L39.600 8M39.600 2L33.600 8" stroke="#f46e54" stroke-width="1.900" stroke-linecap="butt"/></svg>
<svg style="left:120px;top:263px" width="663" height="12"><rect x="0.2" y="0.24" width="662.3" height="11.29" fill="#fff"/><rect x="0.2" y="10.73" width="662.3" height="0.8" fill="rgba(120,120,120,0.300)"/></svg>
<svg style="left:535px;top:263px" width="42" height="11"><rect x="0.9" y="0.24" width="40.4" height="10.49" fill="#ffff80"/></svg>
<svg style="left:140px;top:263px" width="2" height="12"><rect x="0.7" y="0.24" width="1" height="11.29" fill="rgba(60,70,90,0.13)"/></svg>
<svg style="left:172px;top:263px" width="1" height="12"><rect x="0" y="0.24" width="1" height="11.29" fill="rgba(60,70,90,0.13)"/></svg>
<svg style="left:249px;top:263px" width="2" height="12"><rect x="0.5" y="0.24" width="1" height="11.29" fill="rgba(60,70,90,0.13)"/></svg>
<svg style="left:410px;top:263px" width="2" height="12"><rect x="0.7" y="0.24" width="1" height="11.29" fill="rgba(60,70,90,0.13)"/></svg>
<svg style="left:452px;top:263px" width="1" height="12"><rect x="0" y="0.24" width="1" height="11.29" fill="rgba(60,70,90,0.13)"/></svg>
<svg style="left:493px;top:263px" width="2" height="12"><rect x="0.2" y="0.24" width="1" height="11.29" fill="rgba(60,70,90,0.13)"/></svg>
<svg style="left:535px;top:263px" width="1" height="12"><rect x="0" y="0.24" width="1" height="11.29" fill="rgba(60,70,90,0.13)"/></svg>
<svg style="left:576px;top:263px" width="2" height="12"><rect x="0.2" y="0.24" width="1" height="11.29" fill="rgba(60,70,90,0.13)"/></svg>
<svg style="left:627px;top:263px" width="1" height="12"><rect x="0" y="0.24" width="1" height="11.29" fill="rgba(60,70,90,0.13)"/></svg>
<svg style="left:648px;top:263px" width="2" height="12"><rect x="0.2" y="0.24" width="1" height="11.29" fill="rgba(60,70,90,0.13)"/></svg>
<svg style="left:689px;top:263px" width="1" height="12"><rect x="0" y="0.24" width="1" height="11.29" fill="rgba(60,70,90,0.13)"/></svg>
<svg style="left:725px;top:263px" width="2" height="12"><rect x="0.2" y="0.24" width="1" height="11.29" fill="rgba(60,70,90,0.13)"/></svg>
<svg style="left:782px;top:263px" width="1" height="12"><rect x="0" y="0.24" width="1" height="11.29" fill="rgba(60,70,90,0.13)"/></svg>
<svg style="left:127px;top:264px" width="7" height="8"><rect x="0.4" y="1.14" width="6" height="5.9" fill="#fff" stroke="#7d8794" stroke-width="0.6"/></svg>
<svg style="left:152px;top:264px" width="10" height="10"><rect x="0.3" y="0.84" width="9.4" height="8.8" fill="#f0a010"/></svg>
<div class="t" style="left:153px;top:264px;transform:translate(0.89px,0.34px) rotate(0.1deg) scaleX(0.9);font-size:8.6px;line-height:10px;color:#222;font-weight:bold;">D</div>
<div class="t" style="left:174px;top:264px;transform:translate(0.2px,0.98px) rotate(0.1deg) scaleX(0.887);font-size:6.3px;line-height:7px;color:#000;">FV/1/2023</div>
<div class="t" style="left:251px;top:264px;transform:translate(0.7px,0.98px) rotate(0.1deg) scaleX(0.883);font-size:6.3px;line-height:7px;color:#000;">Krzysztof Hibner</div>
<div class="t" style="left:481px;top:264px;transform:translate(0.38px,0.98px) rotate(0.1deg) scaleX(0.907);font-size:6.3px;line-height:7px;color:#000;">9,84</div>
<div class="t" style="left:522px;top:264px;transform:translate(0.58px,0.98px) rotate(0.1deg) scaleX(0.907);font-size:6.3px;line-height:7px;color:#000;">0,00</div>
<div class="t" style="left:545px;top:264px;transform:translate(0.78px,0.98px) rotate(0.1deg) scaleX(0.907);font-size:6.3px;line-height:7px;color:#000;">2023-09-24</div>
<div class="t" style="left:578px;top:264px;transform:translate(0.2px,0.98px) rotate(0.1deg) scaleX(0.895);font-size:6.3px;line-height:7px;color:#000;">gotówka</div>
<div class="t" style="left:643px;top:264px;transform:translate(0.5px,0.98px) rotate(0.1deg) scaleX(0.9);font-size:6.3px;line-height:7px;color:#000;">0</div>
<div class="t" style="left:659px;top:264px;transform:translate(0.48px,0.98px) rotate(0.1deg) scaleX(0.907);font-size:6.3px;line-height:7px;color:#000;">2023-09-24</div>
<div class="t" style="left:694px;top:264px;transform:translate(0.98px,0.98px) rotate(0.1deg) scaleX(0.907);font-size:6.3px;line-height:7px;color:#000;">2023-09-24</div>
<svg style="left:731.700px;top:263.94px" width="44" height="10" viewBox="0 0 44 10"><circle cx="5" cy="5" r="3.600" fill="#e8eef6" stroke="#a9b8cc" stroke-width="0.700"/><rect x="4.500" y="4.200" width="1" height="2.900" fill="#5b86c4"/><rect x="4.500" y="2.600" width="1" height="1" fill="#5b86c4"/><rect x="12.200" y="1.500" width="7" height="7" fill="url(#sq)" stroke="#a8a8a8" stroke-width="0.600"/><path d="M23.500 7.600L27.300 3.400" stroke="#8f9cc6" stroke-width="1.700" stroke-linecap="butt"/><path d="M27.300 3.400L28.500 2.100" stroke="#e8a02c" stroke-width="1.700"/><path d="M28.300 2.300L29 1.600" stroke="#e03a2a" stroke-width="1.700" stroke-linecap="round"/><path d="M22.500 8.700L23.200 7.100L24.200 8z" fill="#2a2a2a" stroke="#2a2a2a" stroke-width="0.400"/><path d="M33.600 2L39.600 8M39.600 2L33.600 8" stroke="#f46e54" stroke-width="1.900" stroke-linecap="butt"/></svg>
<svg style="left:0;top:0" width="1" height="1"><defs><linearGradient id="sq" x1="0" y1="0" x2="1" y2="1"><stop offset="0" stop-color="#fafafa"/><stop offset="0.45" stop-color="#dcdcdc"/><stop offset="1" stop-color="#a6a6a6"/></linearGradient></defs></svg>
<svg style="left:786px;top:177px" width="12" height="241"><rect x="0.2" y="0.7" width="10.9" height="239.9" fill="#f0f0f0"/></svg>
<svg style="left:797px;top:177px" width="3" height="241"><rect x="0.1" y="0.7" width="2.4" height="239.9" fill="#fff"/></svg>
<svg style="left:789.300px;top:180.600px" width="4.600" height="2.700" viewBox="0 0 50 32"><path d="M5 28L25 8L45 28" stroke="#3a3a3a" stroke-width="13" fill="none"/></svg>
<svg style="left:787px;top:185px" width="9" height="9"><rect x="0.1" y="0.9" width="8.8" height="7.9" fill="#cdcdcd"/></svg>
<svg style="left:789.300px;top:412.800px" width="4.600" height="2.700" viewBox="0 0 50 32"><path d="M5 4L25 24L45 4" stroke="#3a3a3a" stroke-width="13" fill="none"/></svg>
<svg style="left:109px;top:417px" width="691" height="61"><rect x="0.3" y="0.6" width="690.2" height="59.8" fill="#fff"/></svg>
<svg style="left:111px;top:420px" width="8" height="5"><rect x="0.6" y="0.2" width="6.6" height="4.2" fill="#1a8a1a"/></svg>
<div class="t" style="left:120px;top:419px;transform:translate(0.4px,0.01px) rotate(0.1deg) scaleX(0.946);font-size:5.8px;line-height:6px;color:#222;">dokument proforma</div>
<svg style="left:171px;top:420px" width="7" height="5"><rect x="0" y="0.2" width="6.6" height="4.2" fill="#b8b8b8"/></svg>
<div class="t" style="left:179px;top:419px;transform:translate(0px,0.01px) rotate(0.1deg) scaleX(0.983);font-size:5.8px;line-height:6px;color:#222;">proforma anulowana</div>
<svg style="left:233px;top:420px" width="8" height="5"><rect x="0.5" y="0.2" width="6.6" height="4.2" fill="#8a1a8a"/></svg>
<div class="t" style="left:242px;top:419px;transform:translate(0px,0.01px) rotate(0.1deg) scaleX(0.945);font-size:5.8px;line-height:6px;color:#222;">mechanizm podzielonej płatności</div>
<svg style="left:326px;top:420px" width="7" height="5"><rect x="0.1" y="0.2" width="6.6" height="4.2" fill="#b8f4b0"/></svg>
<div class="t" style="left:334px;top:419px;transform:translate(0.4px,0.01px) rotate(0.1deg) scaleX(0.956);font-size:5.8px;line-height:6px;color:#222;">zaliczka nierozliczona</div>
<svg style="left:391px;top:420px" width="7" height="5"><rect x="0.4" y="0.2" width="6.6" height="4.2" fill="#0a4a0a"/></svg>
<div class="t" style="left:399px;top:419px;transform:translate(0.2px,0.01px) rotate(0.1deg) scaleX(0.972);font-size:5.8px;line-height:6px;color:#222;">korekta pot. otrz.</div>
<div class="t" style="left:111px;top:426px;transform:translate(0.6px,0.21px) rotate(0.1deg) scaleX(0.888);font-size:6.2px;line-height:7px;color:#111;">Ilość pozycji w bazie:</div>
<div class="t" style="left:166px;top:426px;transform:translate(0.3px,0.26px) rotate(0.1deg) scaleX(0.9);font-size:6.4px;line-height:7px;color:#111;font-weight:bold;">7</div>
<div class="t" style="left:172px;top:426px;transform:translate(0px,0.21px) rotate(0.1deg) scaleX(0.906);font-size:6.2px;line-height:7px;color:#111;">(Czas wczytywania 0,172 s)</div>
<div class="t" style="left:519px;top:436px;transform:translate(0.5px,0.37px) rotate(0.1deg) scaleX(1.007);font-size:6.8px;line-height:7px;color:#222;font-weight:bold;">Wartość netto</div>
<div class="t" style="left:536px;top:446px;transform:translate(0.4px,0.57px) rotate(0.1deg) scaleX(1.077);font-size:6.8px;line-height:7px;color:#111;font-weight:bold;">1 904,00</div>
<div class="t" style="left:587px;top:436px;transform:translate(0px,0.37px) rotate(0.1deg) scaleX(0.967);font-size:6.8px;line-height:7px;color:#222;font-weight:bold;">Wartość VAT</div>
<div class="t" style="left:598px;top:446px;transform:translate(0.6px,0.57px) rotate(0.1deg) scaleX(1.134);font-size:6.8px;line-height:7px;color:#111;font-weight:bold;">~437,92</div>
<div class="t" style="left:645px;top:436px;transform:translate(0.1px,0.37px) rotate(0.1deg) scaleX(1.014);font-size:6.8px;line-height:7px;color:#222;font-weight:bold;">Wartość brutto</div>
<div class="t" style="left:665px;top:446px;transform:translate(0px,0.57px) rotate(0.1deg) scaleX(1.092);font-size:6.8px;line-height:7px;color:#111;font-weight:bold;">2 341,92</div>
<div class="t" style="left:704px;top:436px;transform:translate(0.4px,0.37px) rotate(0.1deg) scaleX(0.98);font-size:6.8px;line-height:7px;color:#222;font-weight:bold;">Niezapłacone brutto</div>
<div class="t" style="left:753px;top:446px;transform:translate(0.8px,0.57px) rotate(0.1deg) scaleX(1.08);font-size:6.8px;line-height:7px;color:#ff1414;font-weight:bold;">0,00</div>
<div class="t" style="left:772px;top:436px;transform:translate(0.6px,0.37px) rotate(0.1deg) scaleX(0.953);font-size:6.8px;line-height:7px;color:#222;font-weight:bold;">Waluta</div>
<div class="t" style="left:777px;top:446px;transform:translate(0.5px,0.57px) rotate(0.1deg) scaleX(0.882);font-size:6.8px;line-height:7px;color:#111;font-weight:bold;">PLN</div>
<div class="t" style="left:112px;top:456px;transform:translate(0.4px,0.41px) rotate(0.1deg) scaleX(0.975);font-size:6.2px;line-height:7px;color:#222;">Krajowy&nbsp; system</div>
<div class="t" style="left:114px;top:465px;transform:translate(0.6px,0.6px) rotate(0.1deg) scaleX(0.97);font-size:10.4px;line-height:11px;color:#111;font-weight:bold;"><span style="color:#e81414;font-weight:normal">e</span>-Faktur</div>
<svg style="left:159px;top:458px" width="2" height="19"><rect x="0.3" y="0" width="0.9" height="18.5" fill="#e05a5a"/></svg>
<svg style="left:163px;top:460px" width="634" height="15"><rect x="1" y="0.7" width="632.5" height="13.5" fill="none" stroke="#d0d0d0" stroke-width="1"/></svg>
<svg style="left:169px;top:457px" width="20" height="7"><rect x="0.5" y="0.5" width="19" height="6.5" fill="#fff"/></svg>
<div class="t" style="left:171px;top:456px;transform:translate(0px,0.41px) rotate(0.1deg) scaleX(0.91);font-size:6.2px;line-height:7px;color:#222;">Status</div>
<div class="t" style="left:167px;top:464px;transform:translate(0px,0.84px) rotate(0.1deg) scaleX(0.965);font-size:6.3px;line-height:7px;color:#111;font-weight:bold;">Stan sesji:</div>
<div class="t" style="left:199px;top:464px;transform:translate(0.4px,0.84px) rotate(0.1deg) scaleX(0.871);font-size:6.3px;line-height:7px;color:#f01414;font-weight:bold;">NIEAKTYWNA</div>
<div class="t" style="left:238px;top:464px;transform:translate(0.7px,0.84px) rotate(0.1deg) scaleX(0.9);font-size:6.3px;line-height:7px;color:#333;">|</div>
<div class="t" style="left:242px;top:464px;transform:translate(0px,0.84px) rotate(0.1deg) scaleX(0.9);font-size:6.3px;line-height:7px;color:#1818e6;">Start sesji</div>
<svg style="left:242px;top:471px" width="25" height="2"><rect x="0" y="0.7" width="24.9" height="0.65" fill="#1818e6"/></svg>
<svg style="left:0px;top:477px" width="800" height="15"><rect x="0" y="0.5" width="800" height="14.5" fill="#2b579a"/></svg>
<div class="t" style="left:11px;top:480px;transform:translate(0.4px,0.65px) rotate(0.1deg) scaleX(0.945);font-size:7.1px;line-height:8px;color:#f4f6fb;">Zalogowana firma:</div>
<div class="t" style="left:659px;top:480px;transform:translate(0.4px,0.65px) rotate(0.1deg) scaleX(0.938);font-size:7.1px;line-height:8px;color:#f4f6fb;">Licencja na program ważna do:</div>
<div class="t" style="left:755px;top:480px;transform:translate(0.4px,0.65px) rotate(0.1deg) scaleX(1.052);font-size:7.1px;line-height:8px;color:#22e622;font-weight:bold;">2024-02-17</div>
<svg style="left:0px;top:0px" width="1" height="492"><rect x="0" y="0" width="1" height="492" fill="#2b579a"/></svg>
<svg style="left:798px;top:31px" width="2" height="447"><rect x="0.8" y="0.6" width="1.2" height="446" fill="#2b579a"/></svg>
</div>
</body></html>
